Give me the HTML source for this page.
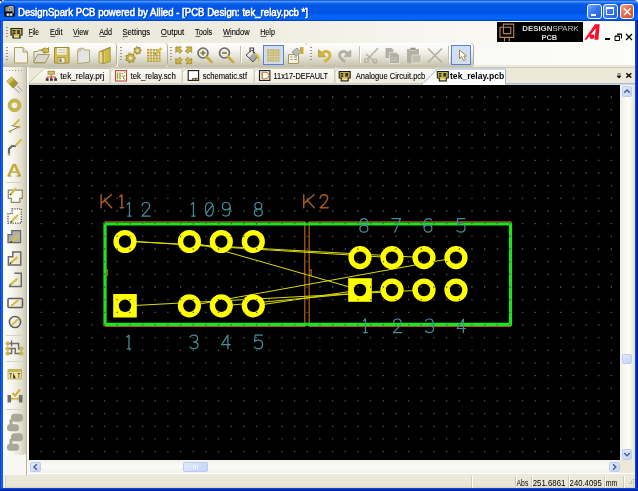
<!DOCTYPE html>
<html><head><meta charset="utf-8">
<style>
*{margin:0;padding:0;box-sizing:border-box}
html,body{width:638px;height:491px;overflow:hidden;background:#ece9d8;font-family:"Liberation Sans",sans-serif;-webkit-font-smoothing:antialiased}
.a{position:absolute}
svg.a{overflow:visible}
#title{left:0;top:0;width:638px;height:21px;background:linear-gradient(#1d63e2 0,#1d63e2 1px,#4a96ff 1px,#4592ff 2px,#1468f0 3px,#0357e6 5px,#0055e5 13px,#0061f6 15px,#0066fc 19px,#0050dc 20px,#0038b0 21px)}
#menubar{left:3px;top:21px;width:632px;height:22px;background:linear-gradient(90deg,#e9e7d6 0,#eeecdf 35%,#f8f7f1 70%,#fdfdfb 100%)}
#tbarea{left:3px;top:43px;width:632px;height:22px;background:linear-gradient(90deg,#f3f2ea 0,#f8f7f2 60%,#fcfcfa 100%)}
.tb{top:43px;height:23.5px;background:linear-gradient(#fefefd 0,#f8f7f3 25%,#e9e7dd 52%,#d6d3c1 78%,#c2beaa 100%);border-radius:0 4px 4px 0;box-shadow:1px 0 0 #b4b09a}
.grip{width:2px;background:repeating-linear-gradient(#9c9986 0,#9c9986 1px,transparent 1px,transparent 3px)}
.sep{width:1px;height:17px;background:#c3bfaa;top:46px;box-shadow:1px 0 0 #fff}
#tabbar{left:27px;top:66.5px;width:608px;height:18.5px;background:#ece9d8}
#lefttb{left:3px;top:67px;width:23px;height:387.5px;background:linear-gradient(90deg,#fefefd 0,#f6f5ef 40%,#e3e0d0 80%,#cdc9b5 100%);border-radius:0 0 4px 4px}
#leftdock{left:3px;top:454.5px;width:24px;height:20px;background:#f8f7f1}
#canvas{left:29px;top:85px;width:591px;height:375px;background:#000}
#vscroll{left:620px;top:85px;width:14.8px;height:375px;background:linear-gradient(90deg,#eeede5 0,#f7f7f2 30%,#fdfdf9 60%,#efede1 85%,#e4e0cc 100%)}
#hscroll{left:29px;top:460px;width:591px;height:12.5px;background:linear-gradient(#f1f0e8,#fbfbf7 45%,#f3f2ea)}
.sbtn{background:linear-gradient(135deg,#e2eafd,#c3d4fa);border:1px solid #b9cbf3;border-radius:2px}
#status{left:3px;top:475px;width:632px;height:12.8px;background:linear-gradient(#ece9da,#e9e6d5 85%,#dcd4b4 100%)}
.st{top:476px;height:12px;border-left:1px solid #cfcbb6;box-shadow:inset 1px 0 0 #fff}
</style></head><body>
<div id="canvas" class="a"></div>
<svg class="a" style="left:0;top:0" width="638" height="491"><g fill="none" stroke="#a85a1c" stroke-width="1.3"><path d="M105.5,221.9 H304.8 V326.3 H105.5 Z"/><path d="M309.2,221.9 H510.5 V326.3 H309.2 Z"/><path d="M105.5,270 h2 v5 h-2"/><path d="M309.2,270 h2 v5 h-2"/></g><path fill="none" stroke="#1ee41e" stroke-width="3.2" d="M105,224 H510.5 V324.3 H105 Z"/><g stroke="#dcdc00" stroke-width="1" fill="none"><line x1="125" y1="241" x2="392" y2="257.6"/><line x1="125" y1="241" x2="424" y2="257.6"/><line x1="189" y1="241" x2="360" y2="290"/><line x1="189" y1="306" x2="456" y2="257.6"/><line x1="125" y1="306" x2="424" y2="290"/><line x1="221" y1="306" x2="392" y2="290"/><line x1="253" y1="306" x2="360" y2="290"/></g><circle cx="125" cy="241.5" r="8.90" fill="#000" stroke="#ffff00" stroke-width="5.40"/><circle cx="189.4" cy="241.5" r="8.90" fill="#000" stroke="#ffff00" stroke-width="5.40"/><circle cx="221.3" cy="241.5" r="8.90" fill="#000" stroke="#ffff00" stroke-width="5.40"/><circle cx="253.3" cy="241.5" r="8.90" fill="#000" stroke="#ffff00" stroke-width="5.40"/><circle cx="189.4" cy="305.8" r="8.90" fill="#000" stroke="#ffff00" stroke-width="5.40"/><circle cx="221.3" cy="305.8" r="8.90" fill="#000" stroke="#ffff00" stroke-width="5.40"/><circle cx="253.3" cy="305.8" r="8.90" fill="#000" stroke="#ffff00" stroke-width="5.40"/><circle cx="360" cy="257.6" r="8.90" fill="#000" stroke="#ffff00" stroke-width="5.40"/><circle cx="392" cy="257.6" r="8.90" fill="#000" stroke="#ffff00" stroke-width="5.40"/><circle cx="424" cy="257.6" r="8.90" fill="#000" stroke="#ffff00" stroke-width="5.40"/><circle cx="456" cy="257.6" r="8.90" fill="#000" stroke="#ffff00" stroke-width="5.40"/><circle cx="392" cy="290" r="8.90" fill="#000" stroke="#ffff00" stroke-width="5.40"/><circle cx="424" cy="290" r="8.90" fill="#000" stroke="#ffff00" stroke-width="5.40"/><circle cx="456" cy="290" r="8.90" fill="#000" stroke="#ffff00" stroke-width="5.40"/><path fill="#ffff00" d="M113.2,294.0h23.6v23.6h-23.6z"/><circle cx="125" cy="305.8" r="6.2" fill="#000"/><path fill="#ffff00" d="M348.2,278.2h23.6v23.6h-23.6z"/><circle cx="360" cy="290" r="6.2" fill="#000"/><g fill="none" stroke="#45929b" stroke-width="1.25" stroke-linecap="round" stroke-linejoin="round"><path transform="translate(125.00,202.50) scale(0.970)" d="M2.4,1.9 L4.6,0 L4.6,14 M2.8,14 H6.4"/><path transform="translate(141.50,202.50) scale(0.970)" d="M0.6,3.2 Q0.8,0 4.5,0 Q8.4,0 8.4,3.6 Q8.4,6.4 0.4,14 L9,14"/><path transform="translate(189.00,202.50) scale(0.970)" d="M2.4,1.9 L4.6,0 L4.6,14 M2.8,14 H6.4"/><path transform="translate(205.00,202.50) scale(0.970)" d="M4.5,0 Q0.4,0 0.4,7 Q0.4,14 4.5,14 Q8.6,14 8.6,7 Q8.6,0 4.5,0 Z M8,2.5 L1,11.5"/><path transform="translate(222.00,202.50) scale(0.970)" d="M0.8,12.8 Q2,14 4.2,14 Q8.5,14 8.5,6 Q8.5,0 4.4,0 Q0.4,0 0.4,4 Q0.4,7.6 4.4,7.6 Q7.4,7.6 8.5,5"/><path transform="translate(254.00,202.50) scale(0.970)" d="M4.5,6.8 Q0.9,6.8 0.9,3.4 Q0.9,0 4.5,0 Q8.1,0 8.1,3.4 Q8.1,6.8 4.5,6.8 Q0.4,6.8 0.4,10.4 Q0.4,14 4.5,14 Q8.6,14 8.6,10.4 Q8.6,6.8 4.5,6.8 Z"/><path transform="translate(359.50,218.60) scale(0.970)" d="M4.5,6.8 Q0.9,6.8 0.9,3.4 Q0.9,0 4.5,0 Q8.1,0 8.1,3.4 Q8.1,6.8 4.5,6.8 Q0.4,6.8 0.4,10.4 Q0.4,14 4.5,14 Q8.6,14 8.6,10.4 Q8.6,6.8 4.5,6.8 Z"/><path transform="translate(391.80,218.60) scale(0.970)" d="M0,0 L9,0 L3,14"/><path transform="translate(423.50,218.60) scale(0.970)" d="M8.2,1.2 Q7,0 4.8,0 Q0.5,0 0.5,8 Q0.5,14 4.6,14 Q8.6,14 8.6,10 Q8.6,6.4 4.6,6.4 Q1.6,6.4 0.5,9"/><path transform="translate(456.50,218.60) scale(0.970)" d="M8.6,0 L1.2,0 L0.6,6.2 Q2,5 4.5,5 Q8.8,5 8.8,9.5 Q8.8,14 4.5,14 Q1.4,14 0.4,12.2"/><path transform="translate(124.50,335.20) scale(0.970)" d="M2.4,1.9 L4.6,0 L4.6,14 M2.8,14 H6.4"/><path transform="translate(189.50,335.20) scale(0.970)" d="M0.6,1.8 Q1.8,0 4.5,0 Q8.3,0 8.3,3.5 Q8.3,6.8 4.2,6.8 Q8.8,6.8 8.8,10.4 Q8.8,14 4.5,14 Q1.4,14 0.4,12.2"/><path transform="translate(221.50,335.20) scale(0.970)" d="M6.6,14 L6.6,0 L0.2,9.8 L9,9.8"/><path transform="translate(254.00,335.20) scale(0.970)" d="M8.6,0 L1.2,0 L0.6,6.2 Q2,5 4.5,5 Q8.8,5 8.8,9.5 Q8.8,14 4.5,14 Q1.4,14 0.4,12.2"/><path transform="translate(361.00,319.00) scale(0.970)" d="M2.4,1.9 L4.6,0 L4.6,14 M2.8,14 H6.4"/><path transform="translate(393.00,319.00) scale(0.970)" d="M0.6,3.2 Q0.8,0 4.5,0 Q8.4,0 8.4,3.6 Q8.4,6.4 0.4,14 L9,14"/><path transform="translate(425.00,319.00) scale(0.970)" d="M0.6,1.8 Q1.8,0 4.5,0 Q8.3,0 8.3,3.5 Q8.3,6.8 4.2,6.8 Q8.8,6.8 8.8,10.4 Q8.8,14 4.5,14 Q1.4,14 0.4,12.2"/><path transform="translate(457.00,319.00) scale(0.970)" d="M6.6,14 L6.6,0 L0.2,9.8 L9,9.8"/></g><g fill="none" stroke="#a85a1c" stroke-width="1.6" stroke-linecap="round" stroke-linejoin="round"><path transform="translate(100.60,194.80) scale(0.930)" d="M0.6,0 L0.6,14 M11.6,0 L0.6,9.2 M4.2,5.6 L11.8,14"/><path transform="translate(117.60,194.80) scale(0.930)" d="M2.4,1.9 L4.6,0 L4.6,14 M2.8,14 H6.4"/><path transform="translate(303.20,194.80) scale(0.930)" d="M0.6,0 L0.6,14 M11.6,0 L0.6,9.2 M4.2,5.6 L11.8,14"/><path transform="translate(319.80,194.80) scale(0.930)" d="M0.6,3.2 Q0.8,0 4.5,0 Q8.4,0 8.4,3.6 Q8.4,6.4 0.4,14 L9,14"/></g><path fill="#555555" d="M40.55,96.35h1.3v1.3h-1.3zM40.55,109.01h1.3v1.3h-1.3zM40.55,121.68h1.3v1.3h-1.3zM40.55,134.34h1.3v1.3h-1.3zM40.55,147.01h1.3v1.3h-1.3zM40.55,159.67h1.3v1.3h-1.3zM40.55,172.34h1.3v1.3h-1.3zM40.55,185.00h1.3v1.3h-1.3zM40.55,197.67h1.3v1.3h-1.3zM40.55,210.33h1.3v1.3h-1.3zM40.55,223.00h1.3v1.3h-1.3zM40.55,235.66h1.3v1.3h-1.3zM40.55,248.33h1.3v1.3h-1.3zM40.55,261.00h1.3v1.3h-1.3zM40.55,273.66h1.3v1.3h-1.3zM40.55,286.33h1.3v1.3h-1.3zM40.55,298.99h1.3v1.3h-1.3zM40.55,311.65h1.3v1.3h-1.3zM40.55,324.32h1.3v1.3h-1.3zM40.55,336.99h1.3v1.3h-1.3zM40.55,349.65h1.3v1.3h-1.3zM40.55,362.31h1.3v1.3h-1.3zM40.55,374.98h1.3v1.3h-1.3zM40.55,387.64h1.3v1.3h-1.3zM40.55,400.31h1.3v1.3h-1.3zM40.55,412.98h1.3v1.3h-1.3zM40.55,425.64h1.3v1.3h-1.3zM40.55,438.31h1.3v1.3h-1.3zM40.55,450.97h1.3v1.3h-1.3zM53.22,96.35h1.3v1.3h-1.3zM53.22,109.01h1.3v1.3h-1.3zM53.22,121.68h1.3v1.3h-1.3zM53.22,134.34h1.3v1.3h-1.3zM53.22,147.01h1.3v1.3h-1.3zM53.22,159.67h1.3v1.3h-1.3zM53.22,172.34h1.3v1.3h-1.3zM53.22,185.00h1.3v1.3h-1.3zM53.22,197.67h1.3v1.3h-1.3zM53.22,210.33h1.3v1.3h-1.3zM53.22,223.00h1.3v1.3h-1.3zM53.22,235.66h1.3v1.3h-1.3zM53.22,248.33h1.3v1.3h-1.3zM53.22,261.00h1.3v1.3h-1.3zM53.22,273.66h1.3v1.3h-1.3zM53.22,286.33h1.3v1.3h-1.3zM53.22,298.99h1.3v1.3h-1.3zM53.22,311.65h1.3v1.3h-1.3zM53.22,324.32h1.3v1.3h-1.3zM53.22,336.99h1.3v1.3h-1.3zM53.22,349.65h1.3v1.3h-1.3zM53.22,362.31h1.3v1.3h-1.3zM53.22,374.98h1.3v1.3h-1.3zM53.22,387.64h1.3v1.3h-1.3zM53.22,400.31h1.3v1.3h-1.3zM53.22,412.98h1.3v1.3h-1.3zM53.22,425.64h1.3v1.3h-1.3zM53.22,438.31h1.3v1.3h-1.3zM53.22,450.97h1.3v1.3h-1.3zM65.89,96.35h1.3v1.3h-1.3zM65.89,109.01h1.3v1.3h-1.3zM65.89,121.68h1.3v1.3h-1.3zM65.89,134.34h1.3v1.3h-1.3zM65.89,147.01h1.3v1.3h-1.3zM65.89,159.67h1.3v1.3h-1.3zM65.89,172.34h1.3v1.3h-1.3zM65.89,185.00h1.3v1.3h-1.3zM65.89,197.67h1.3v1.3h-1.3zM65.89,210.33h1.3v1.3h-1.3zM65.89,223.00h1.3v1.3h-1.3zM65.89,235.66h1.3v1.3h-1.3zM65.89,248.33h1.3v1.3h-1.3zM65.89,261.00h1.3v1.3h-1.3zM65.89,273.66h1.3v1.3h-1.3zM65.89,286.33h1.3v1.3h-1.3zM65.89,298.99h1.3v1.3h-1.3zM65.89,311.65h1.3v1.3h-1.3zM65.89,324.32h1.3v1.3h-1.3zM65.89,336.99h1.3v1.3h-1.3zM65.89,349.65h1.3v1.3h-1.3zM65.89,362.31h1.3v1.3h-1.3zM65.89,374.98h1.3v1.3h-1.3zM65.89,387.64h1.3v1.3h-1.3zM65.89,400.31h1.3v1.3h-1.3zM65.89,412.98h1.3v1.3h-1.3zM65.89,425.64h1.3v1.3h-1.3zM65.89,438.31h1.3v1.3h-1.3zM65.89,450.97h1.3v1.3h-1.3zM78.56,96.35h1.3v1.3h-1.3zM78.56,109.01h1.3v1.3h-1.3zM78.56,121.68h1.3v1.3h-1.3zM78.56,134.34h1.3v1.3h-1.3zM78.56,147.01h1.3v1.3h-1.3zM78.56,159.67h1.3v1.3h-1.3zM78.56,172.34h1.3v1.3h-1.3zM78.56,185.00h1.3v1.3h-1.3zM78.56,197.67h1.3v1.3h-1.3zM78.56,210.33h1.3v1.3h-1.3zM78.56,223.00h1.3v1.3h-1.3zM78.56,235.66h1.3v1.3h-1.3zM78.56,248.33h1.3v1.3h-1.3zM78.56,261.00h1.3v1.3h-1.3zM78.56,273.66h1.3v1.3h-1.3zM78.56,286.33h1.3v1.3h-1.3zM78.56,298.99h1.3v1.3h-1.3zM78.56,311.65h1.3v1.3h-1.3zM78.56,324.32h1.3v1.3h-1.3zM78.56,336.99h1.3v1.3h-1.3zM78.56,349.65h1.3v1.3h-1.3zM78.56,362.31h1.3v1.3h-1.3zM78.56,374.98h1.3v1.3h-1.3zM78.56,387.64h1.3v1.3h-1.3zM78.56,400.31h1.3v1.3h-1.3zM78.56,412.98h1.3v1.3h-1.3zM78.56,425.64h1.3v1.3h-1.3zM78.56,438.31h1.3v1.3h-1.3zM78.56,450.97h1.3v1.3h-1.3zM91.23,96.35h1.3v1.3h-1.3zM91.23,109.01h1.3v1.3h-1.3zM91.23,121.68h1.3v1.3h-1.3zM91.23,134.34h1.3v1.3h-1.3zM91.23,147.01h1.3v1.3h-1.3zM91.23,159.67h1.3v1.3h-1.3zM91.23,172.34h1.3v1.3h-1.3zM91.23,185.00h1.3v1.3h-1.3zM91.23,197.67h1.3v1.3h-1.3zM91.23,210.33h1.3v1.3h-1.3zM91.23,223.00h1.3v1.3h-1.3zM91.23,235.66h1.3v1.3h-1.3zM91.23,248.33h1.3v1.3h-1.3zM91.23,261.00h1.3v1.3h-1.3zM91.23,273.66h1.3v1.3h-1.3zM91.23,286.33h1.3v1.3h-1.3zM91.23,298.99h1.3v1.3h-1.3zM91.23,311.65h1.3v1.3h-1.3zM91.23,324.32h1.3v1.3h-1.3zM91.23,336.99h1.3v1.3h-1.3zM91.23,349.65h1.3v1.3h-1.3zM91.23,362.31h1.3v1.3h-1.3zM91.23,374.98h1.3v1.3h-1.3zM91.23,387.64h1.3v1.3h-1.3zM91.23,400.31h1.3v1.3h-1.3zM91.23,412.98h1.3v1.3h-1.3zM91.23,425.64h1.3v1.3h-1.3zM91.23,438.31h1.3v1.3h-1.3zM91.23,450.97h1.3v1.3h-1.3zM103.90,96.35h1.3v1.3h-1.3zM103.90,109.01h1.3v1.3h-1.3zM103.90,121.68h1.3v1.3h-1.3zM103.90,134.34h1.3v1.3h-1.3zM103.90,147.01h1.3v1.3h-1.3zM103.90,159.67h1.3v1.3h-1.3zM103.90,172.34h1.3v1.3h-1.3zM103.90,185.00h1.3v1.3h-1.3zM103.90,197.67h1.3v1.3h-1.3zM103.90,210.33h1.3v1.3h-1.3zM103.90,223.00h1.3v1.3h-1.3zM103.90,235.66h1.3v1.3h-1.3zM103.90,248.33h1.3v1.3h-1.3zM103.90,261.00h1.3v1.3h-1.3zM103.90,273.66h1.3v1.3h-1.3zM103.90,286.33h1.3v1.3h-1.3zM103.90,298.99h1.3v1.3h-1.3zM103.90,311.65h1.3v1.3h-1.3zM103.90,324.32h1.3v1.3h-1.3zM103.90,336.99h1.3v1.3h-1.3zM103.90,349.65h1.3v1.3h-1.3zM103.90,362.31h1.3v1.3h-1.3zM103.90,374.98h1.3v1.3h-1.3zM103.90,387.64h1.3v1.3h-1.3zM103.90,400.31h1.3v1.3h-1.3zM103.90,412.98h1.3v1.3h-1.3zM103.90,425.64h1.3v1.3h-1.3zM103.90,438.31h1.3v1.3h-1.3zM103.90,450.97h1.3v1.3h-1.3zM116.57,96.35h1.3v1.3h-1.3zM116.57,109.01h1.3v1.3h-1.3zM116.57,121.68h1.3v1.3h-1.3zM116.57,134.34h1.3v1.3h-1.3zM116.57,147.01h1.3v1.3h-1.3zM116.57,159.67h1.3v1.3h-1.3zM116.57,172.34h1.3v1.3h-1.3zM116.57,185.00h1.3v1.3h-1.3zM116.57,197.67h1.3v1.3h-1.3zM116.57,210.33h1.3v1.3h-1.3zM116.57,223.00h1.3v1.3h-1.3zM116.57,235.66h1.3v1.3h-1.3zM116.57,248.33h1.3v1.3h-1.3zM116.57,261.00h1.3v1.3h-1.3zM116.57,273.66h1.3v1.3h-1.3zM116.57,286.33h1.3v1.3h-1.3zM116.57,298.99h1.3v1.3h-1.3zM116.57,311.65h1.3v1.3h-1.3zM116.57,324.32h1.3v1.3h-1.3zM116.57,336.99h1.3v1.3h-1.3zM116.57,349.65h1.3v1.3h-1.3zM116.57,362.31h1.3v1.3h-1.3zM116.57,374.98h1.3v1.3h-1.3zM116.57,387.64h1.3v1.3h-1.3zM116.57,400.31h1.3v1.3h-1.3zM116.57,412.98h1.3v1.3h-1.3zM116.57,425.64h1.3v1.3h-1.3zM116.57,438.31h1.3v1.3h-1.3zM116.57,450.97h1.3v1.3h-1.3zM129.24,96.35h1.3v1.3h-1.3zM129.24,109.01h1.3v1.3h-1.3zM129.24,121.68h1.3v1.3h-1.3zM129.24,134.34h1.3v1.3h-1.3zM129.24,147.01h1.3v1.3h-1.3zM129.24,159.67h1.3v1.3h-1.3zM129.24,172.34h1.3v1.3h-1.3zM129.24,185.00h1.3v1.3h-1.3zM129.24,197.67h1.3v1.3h-1.3zM129.24,210.33h1.3v1.3h-1.3zM129.24,223.00h1.3v1.3h-1.3zM129.24,235.66h1.3v1.3h-1.3zM129.24,248.33h1.3v1.3h-1.3zM129.24,261.00h1.3v1.3h-1.3zM129.24,273.66h1.3v1.3h-1.3zM129.24,286.33h1.3v1.3h-1.3zM129.24,298.99h1.3v1.3h-1.3zM129.24,311.65h1.3v1.3h-1.3zM129.24,324.32h1.3v1.3h-1.3zM129.24,336.99h1.3v1.3h-1.3zM129.24,349.65h1.3v1.3h-1.3zM129.24,362.31h1.3v1.3h-1.3zM129.24,374.98h1.3v1.3h-1.3zM129.24,387.64h1.3v1.3h-1.3zM129.24,400.31h1.3v1.3h-1.3zM129.24,412.98h1.3v1.3h-1.3zM129.24,425.64h1.3v1.3h-1.3zM129.24,438.31h1.3v1.3h-1.3zM129.24,450.97h1.3v1.3h-1.3zM141.91,96.35h1.3v1.3h-1.3zM141.91,109.01h1.3v1.3h-1.3zM141.91,121.68h1.3v1.3h-1.3zM141.91,134.34h1.3v1.3h-1.3zM141.91,147.01h1.3v1.3h-1.3zM141.91,159.67h1.3v1.3h-1.3zM141.91,172.34h1.3v1.3h-1.3zM141.91,185.00h1.3v1.3h-1.3zM141.91,197.67h1.3v1.3h-1.3zM141.91,210.33h1.3v1.3h-1.3zM141.91,223.00h1.3v1.3h-1.3zM141.91,235.66h1.3v1.3h-1.3zM141.91,248.33h1.3v1.3h-1.3zM141.91,261.00h1.3v1.3h-1.3zM141.91,273.66h1.3v1.3h-1.3zM141.91,286.33h1.3v1.3h-1.3zM141.91,298.99h1.3v1.3h-1.3zM141.91,311.65h1.3v1.3h-1.3zM141.91,324.32h1.3v1.3h-1.3zM141.91,336.99h1.3v1.3h-1.3zM141.91,349.65h1.3v1.3h-1.3zM141.91,362.31h1.3v1.3h-1.3zM141.91,374.98h1.3v1.3h-1.3zM141.91,387.64h1.3v1.3h-1.3zM141.91,400.31h1.3v1.3h-1.3zM141.91,412.98h1.3v1.3h-1.3zM141.91,425.64h1.3v1.3h-1.3zM141.91,438.31h1.3v1.3h-1.3zM141.91,450.97h1.3v1.3h-1.3zM154.58,96.35h1.3v1.3h-1.3zM154.58,109.01h1.3v1.3h-1.3zM154.58,121.68h1.3v1.3h-1.3zM154.58,134.34h1.3v1.3h-1.3zM154.58,147.01h1.3v1.3h-1.3zM154.58,159.67h1.3v1.3h-1.3zM154.58,172.34h1.3v1.3h-1.3zM154.58,185.00h1.3v1.3h-1.3zM154.58,197.67h1.3v1.3h-1.3zM154.58,210.33h1.3v1.3h-1.3zM154.58,223.00h1.3v1.3h-1.3zM154.58,235.66h1.3v1.3h-1.3zM154.58,248.33h1.3v1.3h-1.3zM154.58,261.00h1.3v1.3h-1.3zM154.58,273.66h1.3v1.3h-1.3zM154.58,286.33h1.3v1.3h-1.3zM154.58,298.99h1.3v1.3h-1.3zM154.58,311.65h1.3v1.3h-1.3zM154.58,324.32h1.3v1.3h-1.3zM154.58,336.99h1.3v1.3h-1.3zM154.58,349.65h1.3v1.3h-1.3zM154.58,362.31h1.3v1.3h-1.3zM154.58,374.98h1.3v1.3h-1.3zM154.58,387.64h1.3v1.3h-1.3zM154.58,400.31h1.3v1.3h-1.3zM154.58,412.98h1.3v1.3h-1.3zM154.58,425.64h1.3v1.3h-1.3zM154.58,438.31h1.3v1.3h-1.3zM154.58,450.97h1.3v1.3h-1.3zM167.25,96.35h1.3v1.3h-1.3zM167.25,109.01h1.3v1.3h-1.3zM167.25,121.68h1.3v1.3h-1.3zM167.25,134.34h1.3v1.3h-1.3zM167.25,147.01h1.3v1.3h-1.3zM167.25,159.67h1.3v1.3h-1.3zM167.25,172.34h1.3v1.3h-1.3zM167.25,185.00h1.3v1.3h-1.3zM167.25,197.67h1.3v1.3h-1.3zM167.25,210.33h1.3v1.3h-1.3zM167.25,223.00h1.3v1.3h-1.3zM167.25,235.66h1.3v1.3h-1.3zM167.25,248.33h1.3v1.3h-1.3zM167.25,261.00h1.3v1.3h-1.3zM167.25,273.66h1.3v1.3h-1.3zM167.25,286.33h1.3v1.3h-1.3zM167.25,298.99h1.3v1.3h-1.3zM167.25,311.65h1.3v1.3h-1.3zM167.25,324.32h1.3v1.3h-1.3zM167.25,336.99h1.3v1.3h-1.3zM167.25,349.65h1.3v1.3h-1.3zM167.25,362.31h1.3v1.3h-1.3zM167.25,374.98h1.3v1.3h-1.3zM167.25,387.64h1.3v1.3h-1.3zM167.25,400.31h1.3v1.3h-1.3zM167.25,412.98h1.3v1.3h-1.3zM167.25,425.64h1.3v1.3h-1.3zM167.25,438.31h1.3v1.3h-1.3zM167.25,450.97h1.3v1.3h-1.3zM179.92,96.35h1.3v1.3h-1.3zM179.92,109.01h1.3v1.3h-1.3zM179.92,121.68h1.3v1.3h-1.3zM179.92,134.34h1.3v1.3h-1.3zM179.92,147.01h1.3v1.3h-1.3zM179.92,159.67h1.3v1.3h-1.3zM179.92,172.34h1.3v1.3h-1.3zM179.92,185.00h1.3v1.3h-1.3zM179.92,197.67h1.3v1.3h-1.3zM179.92,210.33h1.3v1.3h-1.3zM179.92,223.00h1.3v1.3h-1.3zM179.92,235.66h1.3v1.3h-1.3zM179.92,248.33h1.3v1.3h-1.3zM179.92,261.00h1.3v1.3h-1.3zM179.92,273.66h1.3v1.3h-1.3zM179.92,286.33h1.3v1.3h-1.3zM179.92,298.99h1.3v1.3h-1.3zM179.92,311.65h1.3v1.3h-1.3zM179.92,324.32h1.3v1.3h-1.3zM179.92,336.99h1.3v1.3h-1.3zM179.92,349.65h1.3v1.3h-1.3zM179.92,362.31h1.3v1.3h-1.3zM179.92,374.98h1.3v1.3h-1.3zM179.92,387.64h1.3v1.3h-1.3zM179.92,400.31h1.3v1.3h-1.3zM179.92,412.98h1.3v1.3h-1.3zM179.92,425.64h1.3v1.3h-1.3zM179.92,438.31h1.3v1.3h-1.3zM179.92,450.97h1.3v1.3h-1.3zM192.59,96.35h1.3v1.3h-1.3zM192.59,109.01h1.3v1.3h-1.3zM192.59,121.68h1.3v1.3h-1.3zM192.59,134.34h1.3v1.3h-1.3zM192.59,147.01h1.3v1.3h-1.3zM192.59,159.67h1.3v1.3h-1.3zM192.59,172.34h1.3v1.3h-1.3zM192.59,185.00h1.3v1.3h-1.3zM192.59,197.67h1.3v1.3h-1.3zM192.59,210.33h1.3v1.3h-1.3zM192.59,223.00h1.3v1.3h-1.3zM192.59,235.66h1.3v1.3h-1.3zM192.59,248.33h1.3v1.3h-1.3zM192.59,261.00h1.3v1.3h-1.3zM192.59,273.66h1.3v1.3h-1.3zM192.59,286.33h1.3v1.3h-1.3zM192.59,298.99h1.3v1.3h-1.3zM192.59,311.65h1.3v1.3h-1.3zM192.59,324.32h1.3v1.3h-1.3zM192.59,336.99h1.3v1.3h-1.3zM192.59,349.65h1.3v1.3h-1.3zM192.59,362.31h1.3v1.3h-1.3zM192.59,374.98h1.3v1.3h-1.3zM192.59,387.64h1.3v1.3h-1.3zM192.59,400.31h1.3v1.3h-1.3zM192.59,412.98h1.3v1.3h-1.3zM192.59,425.64h1.3v1.3h-1.3zM192.59,438.31h1.3v1.3h-1.3zM192.59,450.97h1.3v1.3h-1.3zM205.26,96.35h1.3v1.3h-1.3zM205.26,109.01h1.3v1.3h-1.3zM205.26,121.68h1.3v1.3h-1.3zM205.26,134.34h1.3v1.3h-1.3zM205.26,147.01h1.3v1.3h-1.3zM205.26,159.67h1.3v1.3h-1.3zM205.26,172.34h1.3v1.3h-1.3zM205.26,185.00h1.3v1.3h-1.3zM205.26,197.67h1.3v1.3h-1.3zM205.26,210.33h1.3v1.3h-1.3zM205.26,223.00h1.3v1.3h-1.3zM205.26,235.66h1.3v1.3h-1.3zM205.26,248.33h1.3v1.3h-1.3zM205.26,261.00h1.3v1.3h-1.3zM205.26,273.66h1.3v1.3h-1.3zM205.26,286.33h1.3v1.3h-1.3zM205.26,298.99h1.3v1.3h-1.3zM205.26,311.65h1.3v1.3h-1.3zM205.26,324.32h1.3v1.3h-1.3zM205.26,336.99h1.3v1.3h-1.3zM205.26,349.65h1.3v1.3h-1.3zM205.26,362.31h1.3v1.3h-1.3zM205.26,374.98h1.3v1.3h-1.3zM205.26,387.64h1.3v1.3h-1.3zM205.26,400.31h1.3v1.3h-1.3zM205.26,412.98h1.3v1.3h-1.3zM205.26,425.64h1.3v1.3h-1.3zM205.26,438.31h1.3v1.3h-1.3zM205.26,450.97h1.3v1.3h-1.3zM217.93,96.35h1.3v1.3h-1.3zM217.93,109.01h1.3v1.3h-1.3zM217.93,121.68h1.3v1.3h-1.3zM217.93,134.34h1.3v1.3h-1.3zM217.93,147.01h1.3v1.3h-1.3zM217.93,159.67h1.3v1.3h-1.3zM217.93,172.34h1.3v1.3h-1.3zM217.93,185.00h1.3v1.3h-1.3zM217.93,197.67h1.3v1.3h-1.3zM217.93,210.33h1.3v1.3h-1.3zM217.93,223.00h1.3v1.3h-1.3zM217.93,235.66h1.3v1.3h-1.3zM217.93,248.33h1.3v1.3h-1.3zM217.93,261.00h1.3v1.3h-1.3zM217.93,273.66h1.3v1.3h-1.3zM217.93,286.33h1.3v1.3h-1.3zM217.93,298.99h1.3v1.3h-1.3zM217.93,311.65h1.3v1.3h-1.3zM217.93,324.32h1.3v1.3h-1.3zM217.93,336.99h1.3v1.3h-1.3zM217.93,349.65h1.3v1.3h-1.3zM217.93,362.31h1.3v1.3h-1.3zM217.93,374.98h1.3v1.3h-1.3zM217.93,387.64h1.3v1.3h-1.3zM217.93,400.31h1.3v1.3h-1.3zM217.93,412.98h1.3v1.3h-1.3zM217.93,425.64h1.3v1.3h-1.3zM217.93,438.31h1.3v1.3h-1.3zM217.93,450.97h1.3v1.3h-1.3zM230.60,96.35h1.3v1.3h-1.3zM230.60,109.01h1.3v1.3h-1.3zM230.60,121.68h1.3v1.3h-1.3zM230.60,134.34h1.3v1.3h-1.3zM230.60,147.01h1.3v1.3h-1.3zM230.60,159.67h1.3v1.3h-1.3zM230.60,172.34h1.3v1.3h-1.3zM230.60,185.00h1.3v1.3h-1.3zM230.60,197.67h1.3v1.3h-1.3zM230.60,210.33h1.3v1.3h-1.3zM230.60,223.00h1.3v1.3h-1.3zM230.60,235.66h1.3v1.3h-1.3zM230.60,248.33h1.3v1.3h-1.3zM230.60,261.00h1.3v1.3h-1.3zM230.60,273.66h1.3v1.3h-1.3zM230.60,286.33h1.3v1.3h-1.3zM230.60,298.99h1.3v1.3h-1.3zM230.60,311.65h1.3v1.3h-1.3zM230.60,324.32h1.3v1.3h-1.3zM230.60,336.99h1.3v1.3h-1.3zM230.60,349.65h1.3v1.3h-1.3zM230.60,362.31h1.3v1.3h-1.3zM230.60,374.98h1.3v1.3h-1.3zM230.60,387.64h1.3v1.3h-1.3zM230.60,400.31h1.3v1.3h-1.3zM230.60,412.98h1.3v1.3h-1.3zM230.60,425.64h1.3v1.3h-1.3zM230.60,438.31h1.3v1.3h-1.3zM230.60,450.97h1.3v1.3h-1.3zM243.27,96.35h1.3v1.3h-1.3zM243.27,109.01h1.3v1.3h-1.3zM243.27,121.68h1.3v1.3h-1.3zM243.27,134.34h1.3v1.3h-1.3zM243.27,147.01h1.3v1.3h-1.3zM243.27,159.67h1.3v1.3h-1.3zM243.27,172.34h1.3v1.3h-1.3zM243.27,185.00h1.3v1.3h-1.3zM243.27,197.67h1.3v1.3h-1.3zM243.27,210.33h1.3v1.3h-1.3zM243.27,223.00h1.3v1.3h-1.3zM243.27,235.66h1.3v1.3h-1.3zM243.27,248.33h1.3v1.3h-1.3zM243.27,261.00h1.3v1.3h-1.3zM243.27,273.66h1.3v1.3h-1.3zM243.27,286.33h1.3v1.3h-1.3zM243.27,298.99h1.3v1.3h-1.3zM243.27,311.65h1.3v1.3h-1.3zM243.27,324.32h1.3v1.3h-1.3zM243.27,336.99h1.3v1.3h-1.3zM243.27,349.65h1.3v1.3h-1.3zM243.27,362.31h1.3v1.3h-1.3zM243.27,374.98h1.3v1.3h-1.3zM243.27,387.64h1.3v1.3h-1.3zM243.27,400.31h1.3v1.3h-1.3zM243.27,412.98h1.3v1.3h-1.3zM243.27,425.64h1.3v1.3h-1.3zM243.27,438.31h1.3v1.3h-1.3zM243.27,450.97h1.3v1.3h-1.3zM255.94,96.35h1.3v1.3h-1.3zM255.94,109.01h1.3v1.3h-1.3zM255.94,121.68h1.3v1.3h-1.3zM255.94,134.34h1.3v1.3h-1.3zM255.94,147.01h1.3v1.3h-1.3zM255.94,159.67h1.3v1.3h-1.3zM255.94,172.34h1.3v1.3h-1.3zM255.94,185.00h1.3v1.3h-1.3zM255.94,197.67h1.3v1.3h-1.3zM255.94,210.33h1.3v1.3h-1.3zM255.94,223.00h1.3v1.3h-1.3zM255.94,235.66h1.3v1.3h-1.3zM255.94,248.33h1.3v1.3h-1.3zM255.94,261.00h1.3v1.3h-1.3zM255.94,273.66h1.3v1.3h-1.3zM255.94,286.33h1.3v1.3h-1.3zM255.94,298.99h1.3v1.3h-1.3zM255.94,311.65h1.3v1.3h-1.3zM255.94,324.32h1.3v1.3h-1.3zM255.94,336.99h1.3v1.3h-1.3zM255.94,349.65h1.3v1.3h-1.3zM255.94,362.31h1.3v1.3h-1.3zM255.94,374.98h1.3v1.3h-1.3zM255.94,387.64h1.3v1.3h-1.3zM255.94,400.31h1.3v1.3h-1.3zM255.94,412.98h1.3v1.3h-1.3zM255.94,425.64h1.3v1.3h-1.3zM255.94,438.31h1.3v1.3h-1.3zM255.94,450.97h1.3v1.3h-1.3zM268.61,96.35h1.3v1.3h-1.3zM268.61,109.01h1.3v1.3h-1.3zM268.61,121.68h1.3v1.3h-1.3zM268.61,134.34h1.3v1.3h-1.3zM268.61,147.01h1.3v1.3h-1.3zM268.61,159.67h1.3v1.3h-1.3zM268.61,172.34h1.3v1.3h-1.3zM268.61,185.00h1.3v1.3h-1.3zM268.61,197.67h1.3v1.3h-1.3zM268.61,210.33h1.3v1.3h-1.3zM268.61,223.00h1.3v1.3h-1.3zM268.61,235.66h1.3v1.3h-1.3zM268.61,248.33h1.3v1.3h-1.3zM268.61,261.00h1.3v1.3h-1.3zM268.61,273.66h1.3v1.3h-1.3zM268.61,286.33h1.3v1.3h-1.3zM268.61,298.99h1.3v1.3h-1.3zM268.61,311.65h1.3v1.3h-1.3zM268.61,324.32h1.3v1.3h-1.3zM268.61,336.99h1.3v1.3h-1.3zM268.61,349.65h1.3v1.3h-1.3zM268.61,362.31h1.3v1.3h-1.3zM268.61,374.98h1.3v1.3h-1.3zM268.61,387.64h1.3v1.3h-1.3zM268.61,400.31h1.3v1.3h-1.3zM268.61,412.98h1.3v1.3h-1.3zM268.61,425.64h1.3v1.3h-1.3zM268.61,438.31h1.3v1.3h-1.3zM268.61,450.97h1.3v1.3h-1.3zM281.28,96.35h1.3v1.3h-1.3zM281.28,109.01h1.3v1.3h-1.3zM281.28,121.68h1.3v1.3h-1.3zM281.28,134.34h1.3v1.3h-1.3zM281.28,147.01h1.3v1.3h-1.3zM281.28,159.67h1.3v1.3h-1.3zM281.28,172.34h1.3v1.3h-1.3zM281.28,185.00h1.3v1.3h-1.3zM281.28,197.67h1.3v1.3h-1.3zM281.28,210.33h1.3v1.3h-1.3zM281.28,223.00h1.3v1.3h-1.3zM281.28,235.66h1.3v1.3h-1.3zM281.28,248.33h1.3v1.3h-1.3zM281.28,261.00h1.3v1.3h-1.3zM281.28,273.66h1.3v1.3h-1.3zM281.28,286.33h1.3v1.3h-1.3zM281.28,298.99h1.3v1.3h-1.3zM281.28,311.65h1.3v1.3h-1.3zM281.28,324.32h1.3v1.3h-1.3zM281.28,336.99h1.3v1.3h-1.3zM281.28,349.65h1.3v1.3h-1.3zM281.28,362.31h1.3v1.3h-1.3zM281.28,374.98h1.3v1.3h-1.3zM281.28,387.64h1.3v1.3h-1.3zM281.28,400.31h1.3v1.3h-1.3zM281.28,412.98h1.3v1.3h-1.3zM281.28,425.64h1.3v1.3h-1.3zM281.28,438.31h1.3v1.3h-1.3zM281.28,450.97h1.3v1.3h-1.3zM293.95,96.35h1.3v1.3h-1.3zM293.95,109.01h1.3v1.3h-1.3zM293.95,121.68h1.3v1.3h-1.3zM293.95,134.34h1.3v1.3h-1.3zM293.95,147.01h1.3v1.3h-1.3zM293.95,159.67h1.3v1.3h-1.3zM293.95,172.34h1.3v1.3h-1.3zM293.95,185.00h1.3v1.3h-1.3zM293.95,197.67h1.3v1.3h-1.3zM293.95,210.33h1.3v1.3h-1.3zM293.95,223.00h1.3v1.3h-1.3zM293.95,235.66h1.3v1.3h-1.3zM293.95,248.33h1.3v1.3h-1.3zM293.95,261.00h1.3v1.3h-1.3zM293.95,273.66h1.3v1.3h-1.3zM293.95,286.33h1.3v1.3h-1.3zM293.95,298.99h1.3v1.3h-1.3zM293.95,311.65h1.3v1.3h-1.3zM293.95,324.32h1.3v1.3h-1.3zM293.95,336.99h1.3v1.3h-1.3zM293.95,349.65h1.3v1.3h-1.3zM293.95,362.31h1.3v1.3h-1.3zM293.95,374.98h1.3v1.3h-1.3zM293.95,387.64h1.3v1.3h-1.3zM293.95,400.31h1.3v1.3h-1.3zM293.95,412.98h1.3v1.3h-1.3zM293.95,425.64h1.3v1.3h-1.3zM293.95,438.31h1.3v1.3h-1.3zM293.95,450.97h1.3v1.3h-1.3zM306.62,96.35h1.3v1.3h-1.3zM306.62,109.01h1.3v1.3h-1.3zM306.62,121.68h1.3v1.3h-1.3zM306.62,134.34h1.3v1.3h-1.3zM306.62,147.01h1.3v1.3h-1.3zM306.62,159.67h1.3v1.3h-1.3zM306.62,172.34h1.3v1.3h-1.3zM306.62,185.00h1.3v1.3h-1.3zM306.62,197.67h1.3v1.3h-1.3zM306.62,210.33h1.3v1.3h-1.3zM306.62,223.00h1.3v1.3h-1.3zM306.62,235.66h1.3v1.3h-1.3zM306.62,248.33h1.3v1.3h-1.3zM306.62,261.00h1.3v1.3h-1.3zM306.62,273.66h1.3v1.3h-1.3zM306.62,286.33h1.3v1.3h-1.3zM306.62,298.99h1.3v1.3h-1.3zM306.62,311.65h1.3v1.3h-1.3zM306.62,324.32h1.3v1.3h-1.3zM306.62,336.99h1.3v1.3h-1.3zM306.62,349.65h1.3v1.3h-1.3zM306.62,362.31h1.3v1.3h-1.3zM306.62,374.98h1.3v1.3h-1.3zM306.62,387.64h1.3v1.3h-1.3zM306.62,400.31h1.3v1.3h-1.3zM306.62,412.98h1.3v1.3h-1.3zM306.62,425.64h1.3v1.3h-1.3zM306.62,438.31h1.3v1.3h-1.3zM306.62,450.97h1.3v1.3h-1.3zM319.29,96.35h1.3v1.3h-1.3zM319.29,109.01h1.3v1.3h-1.3zM319.29,121.68h1.3v1.3h-1.3zM319.29,134.34h1.3v1.3h-1.3zM319.29,147.01h1.3v1.3h-1.3zM319.29,159.67h1.3v1.3h-1.3zM319.29,172.34h1.3v1.3h-1.3zM319.29,185.00h1.3v1.3h-1.3zM319.29,197.67h1.3v1.3h-1.3zM319.29,210.33h1.3v1.3h-1.3zM319.29,223.00h1.3v1.3h-1.3zM319.29,235.66h1.3v1.3h-1.3zM319.29,248.33h1.3v1.3h-1.3zM319.29,261.00h1.3v1.3h-1.3zM319.29,273.66h1.3v1.3h-1.3zM319.29,286.33h1.3v1.3h-1.3zM319.29,298.99h1.3v1.3h-1.3zM319.29,311.65h1.3v1.3h-1.3zM319.29,324.32h1.3v1.3h-1.3zM319.29,336.99h1.3v1.3h-1.3zM319.29,349.65h1.3v1.3h-1.3zM319.29,362.31h1.3v1.3h-1.3zM319.29,374.98h1.3v1.3h-1.3zM319.29,387.64h1.3v1.3h-1.3zM319.29,400.31h1.3v1.3h-1.3zM319.29,412.98h1.3v1.3h-1.3zM319.29,425.64h1.3v1.3h-1.3zM319.29,438.31h1.3v1.3h-1.3zM319.29,450.97h1.3v1.3h-1.3zM331.96,96.35h1.3v1.3h-1.3zM331.96,109.01h1.3v1.3h-1.3zM331.96,121.68h1.3v1.3h-1.3zM331.96,134.34h1.3v1.3h-1.3zM331.96,147.01h1.3v1.3h-1.3zM331.96,159.67h1.3v1.3h-1.3zM331.96,172.34h1.3v1.3h-1.3zM331.96,185.00h1.3v1.3h-1.3zM331.96,197.67h1.3v1.3h-1.3zM331.96,210.33h1.3v1.3h-1.3zM331.96,223.00h1.3v1.3h-1.3zM331.96,235.66h1.3v1.3h-1.3zM331.96,248.33h1.3v1.3h-1.3zM331.96,261.00h1.3v1.3h-1.3zM331.96,273.66h1.3v1.3h-1.3zM331.96,286.33h1.3v1.3h-1.3zM331.96,298.99h1.3v1.3h-1.3zM331.96,311.65h1.3v1.3h-1.3zM331.96,324.32h1.3v1.3h-1.3zM331.96,336.99h1.3v1.3h-1.3zM331.96,349.65h1.3v1.3h-1.3zM331.96,362.31h1.3v1.3h-1.3zM331.96,374.98h1.3v1.3h-1.3zM331.96,387.64h1.3v1.3h-1.3zM331.96,400.31h1.3v1.3h-1.3zM331.96,412.98h1.3v1.3h-1.3zM331.96,425.64h1.3v1.3h-1.3zM331.96,438.31h1.3v1.3h-1.3zM331.96,450.97h1.3v1.3h-1.3zM344.63,96.35h1.3v1.3h-1.3zM344.63,109.01h1.3v1.3h-1.3zM344.63,121.68h1.3v1.3h-1.3zM344.63,134.34h1.3v1.3h-1.3zM344.63,147.01h1.3v1.3h-1.3zM344.63,159.67h1.3v1.3h-1.3zM344.63,172.34h1.3v1.3h-1.3zM344.63,185.00h1.3v1.3h-1.3zM344.63,197.67h1.3v1.3h-1.3zM344.63,210.33h1.3v1.3h-1.3zM344.63,223.00h1.3v1.3h-1.3zM344.63,235.66h1.3v1.3h-1.3zM344.63,248.33h1.3v1.3h-1.3zM344.63,261.00h1.3v1.3h-1.3zM344.63,273.66h1.3v1.3h-1.3zM344.63,286.33h1.3v1.3h-1.3zM344.63,298.99h1.3v1.3h-1.3zM344.63,311.65h1.3v1.3h-1.3zM344.63,324.32h1.3v1.3h-1.3zM344.63,336.99h1.3v1.3h-1.3zM344.63,349.65h1.3v1.3h-1.3zM344.63,362.31h1.3v1.3h-1.3zM344.63,374.98h1.3v1.3h-1.3zM344.63,387.64h1.3v1.3h-1.3zM344.63,400.31h1.3v1.3h-1.3zM344.63,412.98h1.3v1.3h-1.3zM344.63,425.64h1.3v1.3h-1.3zM344.63,438.31h1.3v1.3h-1.3zM344.63,450.97h1.3v1.3h-1.3zM357.30,96.35h1.3v1.3h-1.3zM357.30,109.01h1.3v1.3h-1.3zM357.30,121.68h1.3v1.3h-1.3zM357.30,134.34h1.3v1.3h-1.3zM357.30,147.01h1.3v1.3h-1.3zM357.30,159.67h1.3v1.3h-1.3zM357.30,172.34h1.3v1.3h-1.3zM357.30,185.00h1.3v1.3h-1.3zM357.30,197.67h1.3v1.3h-1.3zM357.30,210.33h1.3v1.3h-1.3zM357.30,223.00h1.3v1.3h-1.3zM357.30,235.66h1.3v1.3h-1.3zM357.30,248.33h1.3v1.3h-1.3zM357.30,261.00h1.3v1.3h-1.3zM357.30,273.66h1.3v1.3h-1.3zM357.30,286.33h1.3v1.3h-1.3zM357.30,298.99h1.3v1.3h-1.3zM357.30,311.65h1.3v1.3h-1.3zM357.30,324.32h1.3v1.3h-1.3zM357.30,336.99h1.3v1.3h-1.3zM357.30,349.65h1.3v1.3h-1.3zM357.30,362.31h1.3v1.3h-1.3zM357.30,374.98h1.3v1.3h-1.3zM357.30,387.64h1.3v1.3h-1.3zM357.30,400.31h1.3v1.3h-1.3zM357.30,412.98h1.3v1.3h-1.3zM357.30,425.64h1.3v1.3h-1.3zM357.30,438.31h1.3v1.3h-1.3zM357.30,450.97h1.3v1.3h-1.3zM369.97,96.35h1.3v1.3h-1.3zM369.97,109.01h1.3v1.3h-1.3zM369.97,121.68h1.3v1.3h-1.3zM369.97,134.34h1.3v1.3h-1.3zM369.97,147.01h1.3v1.3h-1.3zM369.97,159.67h1.3v1.3h-1.3zM369.97,172.34h1.3v1.3h-1.3zM369.97,185.00h1.3v1.3h-1.3zM369.97,197.67h1.3v1.3h-1.3zM369.97,210.33h1.3v1.3h-1.3zM369.97,223.00h1.3v1.3h-1.3zM369.97,235.66h1.3v1.3h-1.3zM369.97,248.33h1.3v1.3h-1.3zM369.97,261.00h1.3v1.3h-1.3zM369.97,273.66h1.3v1.3h-1.3zM369.97,286.33h1.3v1.3h-1.3zM369.97,298.99h1.3v1.3h-1.3zM369.97,311.65h1.3v1.3h-1.3zM369.97,324.32h1.3v1.3h-1.3zM369.97,336.99h1.3v1.3h-1.3zM369.97,349.65h1.3v1.3h-1.3zM369.97,362.31h1.3v1.3h-1.3zM369.97,374.98h1.3v1.3h-1.3zM369.97,387.64h1.3v1.3h-1.3zM369.97,400.31h1.3v1.3h-1.3zM369.97,412.98h1.3v1.3h-1.3zM369.97,425.64h1.3v1.3h-1.3zM369.97,438.31h1.3v1.3h-1.3zM369.97,450.97h1.3v1.3h-1.3zM382.64,96.35h1.3v1.3h-1.3zM382.64,109.01h1.3v1.3h-1.3zM382.64,121.68h1.3v1.3h-1.3zM382.64,134.34h1.3v1.3h-1.3zM382.64,147.01h1.3v1.3h-1.3zM382.64,159.67h1.3v1.3h-1.3zM382.64,172.34h1.3v1.3h-1.3zM382.64,185.00h1.3v1.3h-1.3zM382.64,197.67h1.3v1.3h-1.3zM382.64,210.33h1.3v1.3h-1.3zM382.64,223.00h1.3v1.3h-1.3zM382.64,235.66h1.3v1.3h-1.3zM382.64,248.33h1.3v1.3h-1.3zM382.64,261.00h1.3v1.3h-1.3zM382.64,273.66h1.3v1.3h-1.3zM382.64,286.33h1.3v1.3h-1.3zM382.64,298.99h1.3v1.3h-1.3zM382.64,311.65h1.3v1.3h-1.3zM382.64,324.32h1.3v1.3h-1.3zM382.64,336.99h1.3v1.3h-1.3zM382.64,349.65h1.3v1.3h-1.3zM382.64,362.31h1.3v1.3h-1.3zM382.64,374.98h1.3v1.3h-1.3zM382.64,387.64h1.3v1.3h-1.3zM382.64,400.31h1.3v1.3h-1.3zM382.64,412.98h1.3v1.3h-1.3zM382.64,425.64h1.3v1.3h-1.3zM382.64,438.31h1.3v1.3h-1.3zM382.64,450.97h1.3v1.3h-1.3zM395.31,96.35h1.3v1.3h-1.3zM395.31,109.01h1.3v1.3h-1.3zM395.31,121.68h1.3v1.3h-1.3zM395.31,134.34h1.3v1.3h-1.3zM395.31,147.01h1.3v1.3h-1.3zM395.31,159.67h1.3v1.3h-1.3zM395.31,172.34h1.3v1.3h-1.3zM395.31,185.00h1.3v1.3h-1.3zM395.31,197.67h1.3v1.3h-1.3zM395.31,210.33h1.3v1.3h-1.3zM395.31,223.00h1.3v1.3h-1.3zM395.31,235.66h1.3v1.3h-1.3zM395.31,248.33h1.3v1.3h-1.3zM395.31,261.00h1.3v1.3h-1.3zM395.31,273.66h1.3v1.3h-1.3zM395.31,286.33h1.3v1.3h-1.3zM395.31,298.99h1.3v1.3h-1.3zM395.31,311.65h1.3v1.3h-1.3zM395.31,324.32h1.3v1.3h-1.3zM395.31,336.99h1.3v1.3h-1.3zM395.31,349.65h1.3v1.3h-1.3zM395.31,362.31h1.3v1.3h-1.3zM395.31,374.98h1.3v1.3h-1.3zM395.31,387.64h1.3v1.3h-1.3zM395.31,400.31h1.3v1.3h-1.3zM395.31,412.98h1.3v1.3h-1.3zM395.31,425.64h1.3v1.3h-1.3zM395.31,438.31h1.3v1.3h-1.3zM395.31,450.97h1.3v1.3h-1.3zM407.98,96.35h1.3v1.3h-1.3zM407.98,109.01h1.3v1.3h-1.3zM407.98,121.68h1.3v1.3h-1.3zM407.98,134.34h1.3v1.3h-1.3zM407.98,147.01h1.3v1.3h-1.3zM407.98,159.67h1.3v1.3h-1.3zM407.98,172.34h1.3v1.3h-1.3zM407.98,185.00h1.3v1.3h-1.3zM407.98,197.67h1.3v1.3h-1.3zM407.98,210.33h1.3v1.3h-1.3zM407.98,223.00h1.3v1.3h-1.3zM407.98,235.66h1.3v1.3h-1.3zM407.98,248.33h1.3v1.3h-1.3zM407.98,261.00h1.3v1.3h-1.3zM407.98,273.66h1.3v1.3h-1.3zM407.98,286.33h1.3v1.3h-1.3zM407.98,298.99h1.3v1.3h-1.3zM407.98,311.65h1.3v1.3h-1.3zM407.98,324.32h1.3v1.3h-1.3zM407.98,336.99h1.3v1.3h-1.3zM407.98,349.65h1.3v1.3h-1.3zM407.98,362.31h1.3v1.3h-1.3zM407.98,374.98h1.3v1.3h-1.3zM407.98,387.64h1.3v1.3h-1.3zM407.98,400.31h1.3v1.3h-1.3zM407.98,412.98h1.3v1.3h-1.3zM407.98,425.64h1.3v1.3h-1.3zM407.98,438.31h1.3v1.3h-1.3zM407.98,450.97h1.3v1.3h-1.3zM420.65,96.35h1.3v1.3h-1.3zM420.65,109.01h1.3v1.3h-1.3zM420.65,121.68h1.3v1.3h-1.3zM420.65,134.34h1.3v1.3h-1.3zM420.65,147.01h1.3v1.3h-1.3zM420.65,159.67h1.3v1.3h-1.3zM420.65,172.34h1.3v1.3h-1.3zM420.65,185.00h1.3v1.3h-1.3zM420.65,197.67h1.3v1.3h-1.3zM420.65,210.33h1.3v1.3h-1.3zM420.65,223.00h1.3v1.3h-1.3zM420.65,235.66h1.3v1.3h-1.3zM420.65,248.33h1.3v1.3h-1.3zM420.65,261.00h1.3v1.3h-1.3zM420.65,273.66h1.3v1.3h-1.3zM420.65,286.33h1.3v1.3h-1.3zM420.65,298.99h1.3v1.3h-1.3zM420.65,311.65h1.3v1.3h-1.3zM420.65,324.32h1.3v1.3h-1.3zM420.65,336.99h1.3v1.3h-1.3zM420.65,349.65h1.3v1.3h-1.3zM420.65,362.31h1.3v1.3h-1.3zM420.65,374.98h1.3v1.3h-1.3zM420.65,387.64h1.3v1.3h-1.3zM420.65,400.31h1.3v1.3h-1.3zM420.65,412.98h1.3v1.3h-1.3zM420.65,425.64h1.3v1.3h-1.3zM420.65,438.31h1.3v1.3h-1.3zM420.65,450.97h1.3v1.3h-1.3zM433.32,96.35h1.3v1.3h-1.3zM433.32,109.01h1.3v1.3h-1.3zM433.32,121.68h1.3v1.3h-1.3zM433.32,134.34h1.3v1.3h-1.3zM433.32,147.01h1.3v1.3h-1.3zM433.32,159.67h1.3v1.3h-1.3zM433.32,172.34h1.3v1.3h-1.3zM433.32,185.00h1.3v1.3h-1.3zM433.32,197.67h1.3v1.3h-1.3zM433.32,210.33h1.3v1.3h-1.3zM433.32,223.00h1.3v1.3h-1.3zM433.32,235.66h1.3v1.3h-1.3zM433.32,248.33h1.3v1.3h-1.3zM433.32,261.00h1.3v1.3h-1.3zM433.32,273.66h1.3v1.3h-1.3zM433.32,286.33h1.3v1.3h-1.3zM433.32,298.99h1.3v1.3h-1.3zM433.32,311.65h1.3v1.3h-1.3zM433.32,324.32h1.3v1.3h-1.3zM433.32,336.99h1.3v1.3h-1.3zM433.32,349.65h1.3v1.3h-1.3zM433.32,362.31h1.3v1.3h-1.3zM433.32,374.98h1.3v1.3h-1.3zM433.32,387.64h1.3v1.3h-1.3zM433.32,400.31h1.3v1.3h-1.3zM433.32,412.98h1.3v1.3h-1.3zM433.32,425.64h1.3v1.3h-1.3zM433.32,438.31h1.3v1.3h-1.3zM433.32,450.97h1.3v1.3h-1.3zM445.99,96.35h1.3v1.3h-1.3zM445.99,109.01h1.3v1.3h-1.3zM445.99,121.68h1.3v1.3h-1.3zM445.99,134.34h1.3v1.3h-1.3zM445.99,147.01h1.3v1.3h-1.3zM445.99,159.67h1.3v1.3h-1.3zM445.99,172.34h1.3v1.3h-1.3zM445.99,185.00h1.3v1.3h-1.3zM445.99,197.67h1.3v1.3h-1.3zM445.99,210.33h1.3v1.3h-1.3zM445.99,223.00h1.3v1.3h-1.3zM445.99,235.66h1.3v1.3h-1.3zM445.99,248.33h1.3v1.3h-1.3zM445.99,261.00h1.3v1.3h-1.3zM445.99,273.66h1.3v1.3h-1.3zM445.99,286.33h1.3v1.3h-1.3zM445.99,298.99h1.3v1.3h-1.3zM445.99,311.65h1.3v1.3h-1.3zM445.99,324.32h1.3v1.3h-1.3zM445.99,336.99h1.3v1.3h-1.3zM445.99,349.65h1.3v1.3h-1.3zM445.99,362.31h1.3v1.3h-1.3zM445.99,374.98h1.3v1.3h-1.3zM445.99,387.64h1.3v1.3h-1.3zM445.99,400.31h1.3v1.3h-1.3zM445.99,412.98h1.3v1.3h-1.3zM445.99,425.64h1.3v1.3h-1.3zM445.99,438.31h1.3v1.3h-1.3zM445.99,450.97h1.3v1.3h-1.3zM458.66,96.35h1.3v1.3h-1.3zM458.66,109.01h1.3v1.3h-1.3zM458.66,121.68h1.3v1.3h-1.3zM458.66,134.34h1.3v1.3h-1.3zM458.66,147.01h1.3v1.3h-1.3zM458.66,159.67h1.3v1.3h-1.3zM458.66,172.34h1.3v1.3h-1.3zM458.66,185.00h1.3v1.3h-1.3zM458.66,197.67h1.3v1.3h-1.3zM458.66,210.33h1.3v1.3h-1.3zM458.66,223.00h1.3v1.3h-1.3zM458.66,235.66h1.3v1.3h-1.3zM458.66,248.33h1.3v1.3h-1.3zM458.66,261.00h1.3v1.3h-1.3zM458.66,273.66h1.3v1.3h-1.3zM458.66,286.33h1.3v1.3h-1.3zM458.66,298.99h1.3v1.3h-1.3zM458.66,311.65h1.3v1.3h-1.3zM458.66,324.32h1.3v1.3h-1.3zM458.66,336.99h1.3v1.3h-1.3zM458.66,349.65h1.3v1.3h-1.3zM458.66,362.31h1.3v1.3h-1.3zM458.66,374.98h1.3v1.3h-1.3zM458.66,387.64h1.3v1.3h-1.3zM458.66,400.31h1.3v1.3h-1.3zM458.66,412.98h1.3v1.3h-1.3zM458.66,425.64h1.3v1.3h-1.3zM458.66,438.31h1.3v1.3h-1.3zM458.66,450.97h1.3v1.3h-1.3zM471.33,96.35h1.3v1.3h-1.3zM471.33,109.01h1.3v1.3h-1.3zM471.33,121.68h1.3v1.3h-1.3zM471.33,134.34h1.3v1.3h-1.3zM471.33,147.01h1.3v1.3h-1.3zM471.33,159.67h1.3v1.3h-1.3zM471.33,172.34h1.3v1.3h-1.3zM471.33,185.00h1.3v1.3h-1.3zM471.33,197.67h1.3v1.3h-1.3zM471.33,210.33h1.3v1.3h-1.3zM471.33,223.00h1.3v1.3h-1.3zM471.33,235.66h1.3v1.3h-1.3zM471.33,248.33h1.3v1.3h-1.3zM471.33,261.00h1.3v1.3h-1.3zM471.33,273.66h1.3v1.3h-1.3zM471.33,286.33h1.3v1.3h-1.3zM471.33,298.99h1.3v1.3h-1.3zM471.33,311.65h1.3v1.3h-1.3zM471.33,324.32h1.3v1.3h-1.3zM471.33,336.99h1.3v1.3h-1.3zM471.33,349.65h1.3v1.3h-1.3zM471.33,362.31h1.3v1.3h-1.3zM471.33,374.98h1.3v1.3h-1.3zM471.33,387.64h1.3v1.3h-1.3zM471.33,400.31h1.3v1.3h-1.3zM471.33,412.98h1.3v1.3h-1.3zM471.33,425.64h1.3v1.3h-1.3zM471.33,438.31h1.3v1.3h-1.3zM471.33,450.97h1.3v1.3h-1.3zM484.00,96.35h1.3v1.3h-1.3zM484.00,109.01h1.3v1.3h-1.3zM484.00,121.68h1.3v1.3h-1.3zM484.00,134.34h1.3v1.3h-1.3zM484.00,147.01h1.3v1.3h-1.3zM484.00,159.67h1.3v1.3h-1.3zM484.00,172.34h1.3v1.3h-1.3zM484.00,185.00h1.3v1.3h-1.3zM484.00,197.67h1.3v1.3h-1.3zM484.00,210.33h1.3v1.3h-1.3zM484.00,223.00h1.3v1.3h-1.3zM484.00,235.66h1.3v1.3h-1.3zM484.00,248.33h1.3v1.3h-1.3zM484.00,261.00h1.3v1.3h-1.3zM484.00,273.66h1.3v1.3h-1.3zM484.00,286.33h1.3v1.3h-1.3zM484.00,298.99h1.3v1.3h-1.3zM484.00,311.65h1.3v1.3h-1.3zM484.00,324.32h1.3v1.3h-1.3zM484.00,336.99h1.3v1.3h-1.3zM484.00,349.65h1.3v1.3h-1.3zM484.00,362.31h1.3v1.3h-1.3zM484.00,374.98h1.3v1.3h-1.3zM484.00,387.64h1.3v1.3h-1.3zM484.00,400.31h1.3v1.3h-1.3zM484.00,412.98h1.3v1.3h-1.3zM484.00,425.64h1.3v1.3h-1.3zM484.00,438.31h1.3v1.3h-1.3zM484.00,450.97h1.3v1.3h-1.3zM496.67,96.35h1.3v1.3h-1.3zM496.67,109.01h1.3v1.3h-1.3zM496.67,121.68h1.3v1.3h-1.3zM496.67,134.34h1.3v1.3h-1.3zM496.67,147.01h1.3v1.3h-1.3zM496.67,159.67h1.3v1.3h-1.3zM496.67,172.34h1.3v1.3h-1.3zM496.67,185.00h1.3v1.3h-1.3zM496.67,197.67h1.3v1.3h-1.3zM496.67,210.33h1.3v1.3h-1.3zM496.67,223.00h1.3v1.3h-1.3zM496.67,235.66h1.3v1.3h-1.3zM496.67,248.33h1.3v1.3h-1.3zM496.67,261.00h1.3v1.3h-1.3zM496.67,273.66h1.3v1.3h-1.3zM496.67,286.33h1.3v1.3h-1.3zM496.67,298.99h1.3v1.3h-1.3zM496.67,311.65h1.3v1.3h-1.3zM496.67,324.32h1.3v1.3h-1.3zM496.67,336.99h1.3v1.3h-1.3zM496.67,349.65h1.3v1.3h-1.3zM496.67,362.31h1.3v1.3h-1.3zM496.67,374.98h1.3v1.3h-1.3zM496.67,387.64h1.3v1.3h-1.3zM496.67,400.31h1.3v1.3h-1.3zM496.67,412.98h1.3v1.3h-1.3zM496.67,425.64h1.3v1.3h-1.3zM496.67,438.31h1.3v1.3h-1.3zM496.67,450.97h1.3v1.3h-1.3zM509.34,96.35h1.3v1.3h-1.3zM509.34,109.01h1.3v1.3h-1.3zM509.34,121.68h1.3v1.3h-1.3zM509.34,134.34h1.3v1.3h-1.3zM509.34,147.01h1.3v1.3h-1.3zM509.34,159.67h1.3v1.3h-1.3zM509.34,172.34h1.3v1.3h-1.3zM509.34,185.00h1.3v1.3h-1.3zM509.34,197.67h1.3v1.3h-1.3zM509.34,210.33h1.3v1.3h-1.3zM509.34,223.00h1.3v1.3h-1.3zM509.34,235.66h1.3v1.3h-1.3zM509.34,248.33h1.3v1.3h-1.3zM509.34,261.00h1.3v1.3h-1.3zM509.34,273.66h1.3v1.3h-1.3zM509.34,286.33h1.3v1.3h-1.3zM509.34,298.99h1.3v1.3h-1.3zM509.34,311.65h1.3v1.3h-1.3zM509.34,324.32h1.3v1.3h-1.3zM509.34,336.99h1.3v1.3h-1.3zM509.34,349.65h1.3v1.3h-1.3zM509.34,362.31h1.3v1.3h-1.3zM509.34,374.98h1.3v1.3h-1.3zM509.34,387.64h1.3v1.3h-1.3zM509.34,400.31h1.3v1.3h-1.3zM509.34,412.98h1.3v1.3h-1.3zM509.34,425.64h1.3v1.3h-1.3zM509.34,438.31h1.3v1.3h-1.3zM509.34,450.97h1.3v1.3h-1.3zM522.01,96.35h1.3v1.3h-1.3zM522.01,109.01h1.3v1.3h-1.3zM522.01,121.68h1.3v1.3h-1.3zM522.01,134.34h1.3v1.3h-1.3zM522.01,147.01h1.3v1.3h-1.3zM522.01,159.67h1.3v1.3h-1.3zM522.01,172.34h1.3v1.3h-1.3zM522.01,185.00h1.3v1.3h-1.3zM522.01,197.67h1.3v1.3h-1.3zM522.01,210.33h1.3v1.3h-1.3zM522.01,223.00h1.3v1.3h-1.3zM522.01,235.66h1.3v1.3h-1.3zM522.01,248.33h1.3v1.3h-1.3zM522.01,261.00h1.3v1.3h-1.3zM522.01,273.66h1.3v1.3h-1.3zM522.01,286.33h1.3v1.3h-1.3zM522.01,298.99h1.3v1.3h-1.3zM522.01,311.65h1.3v1.3h-1.3zM522.01,324.32h1.3v1.3h-1.3zM522.01,336.99h1.3v1.3h-1.3zM522.01,349.65h1.3v1.3h-1.3zM522.01,362.31h1.3v1.3h-1.3zM522.01,374.98h1.3v1.3h-1.3zM522.01,387.64h1.3v1.3h-1.3zM522.01,400.31h1.3v1.3h-1.3zM522.01,412.98h1.3v1.3h-1.3zM522.01,425.64h1.3v1.3h-1.3zM522.01,438.31h1.3v1.3h-1.3zM522.01,450.97h1.3v1.3h-1.3zM534.68,96.35h1.3v1.3h-1.3zM534.68,109.01h1.3v1.3h-1.3zM534.68,121.68h1.3v1.3h-1.3zM534.68,134.34h1.3v1.3h-1.3zM534.68,147.01h1.3v1.3h-1.3zM534.68,159.67h1.3v1.3h-1.3zM534.68,172.34h1.3v1.3h-1.3zM534.68,185.00h1.3v1.3h-1.3zM534.68,197.67h1.3v1.3h-1.3zM534.68,210.33h1.3v1.3h-1.3zM534.68,223.00h1.3v1.3h-1.3zM534.68,235.66h1.3v1.3h-1.3zM534.68,248.33h1.3v1.3h-1.3zM534.68,261.00h1.3v1.3h-1.3zM534.68,273.66h1.3v1.3h-1.3zM534.68,286.33h1.3v1.3h-1.3zM534.68,298.99h1.3v1.3h-1.3zM534.68,311.65h1.3v1.3h-1.3zM534.68,324.32h1.3v1.3h-1.3zM534.68,336.99h1.3v1.3h-1.3zM534.68,349.65h1.3v1.3h-1.3zM534.68,362.31h1.3v1.3h-1.3zM534.68,374.98h1.3v1.3h-1.3zM534.68,387.64h1.3v1.3h-1.3zM534.68,400.31h1.3v1.3h-1.3zM534.68,412.98h1.3v1.3h-1.3zM534.68,425.64h1.3v1.3h-1.3zM534.68,438.31h1.3v1.3h-1.3zM534.68,450.97h1.3v1.3h-1.3zM547.35,96.35h1.3v1.3h-1.3zM547.35,109.01h1.3v1.3h-1.3zM547.35,121.68h1.3v1.3h-1.3zM547.35,134.34h1.3v1.3h-1.3zM547.35,147.01h1.3v1.3h-1.3zM547.35,159.67h1.3v1.3h-1.3zM547.35,172.34h1.3v1.3h-1.3zM547.35,185.00h1.3v1.3h-1.3zM547.35,197.67h1.3v1.3h-1.3zM547.35,210.33h1.3v1.3h-1.3zM547.35,223.00h1.3v1.3h-1.3zM547.35,235.66h1.3v1.3h-1.3zM547.35,248.33h1.3v1.3h-1.3zM547.35,261.00h1.3v1.3h-1.3zM547.35,273.66h1.3v1.3h-1.3zM547.35,286.33h1.3v1.3h-1.3zM547.35,298.99h1.3v1.3h-1.3zM547.35,311.65h1.3v1.3h-1.3zM547.35,324.32h1.3v1.3h-1.3zM547.35,336.99h1.3v1.3h-1.3zM547.35,349.65h1.3v1.3h-1.3zM547.35,362.31h1.3v1.3h-1.3zM547.35,374.98h1.3v1.3h-1.3zM547.35,387.64h1.3v1.3h-1.3zM547.35,400.31h1.3v1.3h-1.3zM547.35,412.98h1.3v1.3h-1.3zM547.35,425.64h1.3v1.3h-1.3zM547.35,438.31h1.3v1.3h-1.3zM547.35,450.97h1.3v1.3h-1.3zM560.02,96.35h1.3v1.3h-1.3zM560.02,109.01h1.3v1.3h-1.3zM560.02,121.68h1.3v1.3h-1.3zM560.02,134.34h1.3v1.3h-1.3zM560.02,147.01h1.3v1.3h-1.3zM560.02,159.67h1.3v1.3h-1.3zM560.02,172.34h1.3v1.3h-1.3zM560.02,185.00h1.3v1.3h-1.3zM560.02,197.67h1.3v1.3h-1.3zM560.02,210.33h1.3v1.3h-1.3zM560.02,223.00h1.3v1.3h-1.3zM560.02,235.66h1.3v1.3h-1.3zM560.02,248.33h1.3v1.3h-1.3zM560.02,261.00h1.3v1.3h-1.3zM560.02,273.66h1.3v1.3h-1.3zM560.02,286.33h1.3v1.3h-1.3zM560.02,298.99h1.3v1.3h-1.3zM560.02,311.65h1.3v1.3h-1.3zM560.02,324.32h1.3v1.3h-1.3zM560.02,336.99h1.3v1.3h-1.3zM560.02,349.65h1.3v1.3h-1.3zM560.02,362.31h1.3v1.3h-1.3zM560.02,374.98h1.3v1.3h-1.3zM560.02,387.64h1.3v1.3h-1.3zM560.02,400.31h1.3v1.3h-1.3zM560.02,412.98h1.3v1.3h-1.3zM560.02,425.64h1.3v1.3h-1.3zM560.02,438.31h1.3v1.3h-1.3zM560.02,450.97h1.3v1.3h-1.3zM572.69,96.35h1.3v1.3h-1.3zM572.69,109.01h1.3v1.3h-1.3zM572.69,121.68h1.3v1.3h-1.3zM572.69,134.34h1.3v1.3h-1.3zM572.69,147.01h1.3v1.3h-1.3zM572.69,159.67h1.3v1.3h-1.3zM572.69,172.34h1.3v1.3h-1.3zM572.69,185.00h1.3v1.3h-1.3zM572.69,197.67h1.3v1.3h-1.3zM572.69,210.33h1.3v1.3h-1.3zM572.69,223.00h1.3v1.3h-1.3zM572.69,235.66h1.3v1.3h-1.3zM572.69,248.33h1.3v1.3h-1.3zM572.69,261.00h1.3v1.3h-1.3zM572.69,273.66h1.3v1.3h-1.3zM572.69,286.33h1.3v1.3h-1.3zM572.69,298.99h1.3v1.3h-1.3zM572.69,311.65h1.3v1.3h-1.3zM572.69,324.32h1.3v1.3h-1.3zM572.69,336.99h1.3v1.3h-1.3zM572.69,349.65h1.3v1.3h-1.3zM572.69,362.31h1.3v1.3h-1.3zM572.69,374.98h1.3v1.3h-1.3zM572.69,387.64h1.3v1.3h-1.3zM572.69,400.31h1.3v1.3h-1.3zM572.69,412.98h1.3v1.3h-1.3zM572.69,425.64h1.3v1.3h-1.3zM572.69,438.31h1.3v1.3h-1.3zM572.69,450.97h1.3v1.3h-1.3zM585.36,96.35h1.3v1.3h-1.3zM585.36,109.01h1.3v1.3h-1.3zM585.36,121.68h1.3v1.3h-1.3zM585.36,134.34h1.3v1.3h-1.3zM585.36,147.01h1.3v1.3h-1.3zM585.36,159.67h1.3v1.3h-1.3zM585.36,172.34h1.3v1.3h-1.3zM585.36,185.00h1.3v1.3h-1.3zM585.36,197.67h1.3v1.3h-1.3zM585.36,210.33h1.3v1.3h-1.3zM585.36,223.00h1.3v1.3h-1.3zM585.36,235.66h1.3v1.3h-1.3zM585.36,248.33h1.3v1.3h-1.3zM585.36,261.00h1.3v1.3h-1.3zM585.36,273.66h1.3v1.3h-1.3zM585.36,286.33h1.3v1.3h-1.3zM585.36,298.99h1.3v1.3h-1.3zM585.36,311.65h1.3v1.3h-1.3zM585.36,324.32h1.3v1.3h-1.3zM585.36,336.99h1.3v1.3h-1.3zM585.36,349.65h1.3v1.3h-1.3zM585.36,362.31h1.3v1.3h-1.3zM585.36,374.98h1.3v1.3h-1.3zM585.36,387.64h1.3v1.3h-1.3zM585.36,400.31h1.3v1.3h-1.3zM585.36,412.98h1.3v1.3h-1.3zM585.36,425.64h1.3v1.3h-1.3zM585.36,438.31h1.3v1.3h-1.3zM585.36,450.97h1.3v1.3h-1.3zM598.03,96.35h1.3v1.3h-1.3zM598.03,109.01h1.3v1.3h-1.3zM598.03,121.68h1.3v1.3h-1.3zM598.03,134.34h1.3v1.3h-1.3zM598.03,147.01h1.3v1.3h-1.3zM598.03,159.67h1.3v1.3h-1.3zM598.03,172.34h1.3v1.3h-1.3zM598.03,185.00h1.3v1.3h-1.3zM598.03,197.67h1.3v1.3h-1.3zM598.03,210.33h1.3v1.3h-1.3zM598.03,223.00h1.3v1.3h-1.3zM598.03,235.66h1.3v1.3h-1.3zM598.03,248.33h1.3v1.3h-1.3zM598.03,261.00h1.3v1.3h-1.3zM598.03,273.66h1.3v1.3h-1.3zM598.03,286.33h1.3v1.3h-1.3zM598.03,298.99h1.3v1.3h-1.3zM598.03,311.65h1.3v1.3h-1.3zM598.03,324.32h1.3v1.3h-1.3zM598.03,336.99h1.3v1.3h-1.3zM598.03,349.65h1.3v1.3h-1.3zM598.03,362.31h1.3v1.3h-1.3zM598.03,374.98h1.3v1.3h-1.3zM598.03,387.64h1.3v1.3h-1.3zM598.03,400.31h1.3v1.3h-1.3zM598.03,412.98h1.3v1.3h-1.3zM598.03,425.64h1.3v1.3h-1.3zM598.03,438.31h1.3v1.3h-1.3zM598.03,450.97h1.3v1.3h-1.3zM610.70,96.35h1.3v1.3h-1.3zM610.70,109.01h1.3v1.3h-1.3zM610.70,121.68h1.3v1.3h-1.3zM610.70,134.34h1.3v1.3h-1.3zM610.70,147.01h1.3v1.3h-1.3zM610.70,159.67h1.3v1.3h-1.3zM610.70,172.34h1.3v1.3h-1.3zM610.70,185.00h1.3v1.3h-1.3zM610.70,197.67h1.3v1.3h-1.3zM610.70,210.33h1.3v1.3h-1.3zM610.70,223.00h1.3v1.3h-1.3zM610.70,235.66h1.3v1.3h-1.3zM610.70,248.33h1.3v1.3h-1.3zM610.70,261.00h1.3v1.3h-1.3zM610.70,273.66h1.3v1.3h-1.3zM610.70,286.33h1.3v1.3h-1.3zM610.70,298.99h1.3v1.3h-1.3zM610.70,311.65h1.3v1.3h-1.3zM610.70,324.32h1.3v1.3h-1.3zM610.70,336.99h1.3v1.3h-1.3zM610.70,349.65h1.3v1.3h-1.3zM610.70,362.31h1.3v1.3h-1.3zM610.70,374.98h1.3v1.3h-1.3zM610.70,387.64h1.3v1.3h-1.3zM610.70,400.31h1.3v1.3h-1.3zM610.70,412.98h1.3v1.3h-1.3zM610.70,425.64h1.3v1.3h-1.3zM610.70,438.31h1.3v1.3h-1.3zM610.70,450.97h1.3v1.3h-1.3z"/></svg>

<div id="title" class="a"></div>
<svg class="a" style="left:0;top:0" width="638" height="6"><rect x="0" y="0" width="2" height="1" fill="#2a2a2a"/><rect x="0" y="1" width="1.2" height="2.5" fill="#e8e6d8"/><rect x="2" y="0" width="2" height="1" fill="#b8c8ee"/><path d="M634,0 H638 V4 Q638,0 634,0Z" fill="#f2f1ea"/><path d="M636,0 H638 V2.5 Q637.5,0.5 636,0Z" fill="#fbfbf8"/></svg>
<svg class="a" style="left:0;top:0" width="20" height="20"><rect x="4.2" y="5.6" width="10.6" height="11.2" rx="1.6" fill="#0a0a0a"/><rect x="5.4" y="6.8" width="7.4" height="4.6" fill="#8c8c8c"/><path d="M8.5,6.7 H13.2 V13.2" fill="none" stroke="#e8e8e8" stroke-width="0.9"/><circle cx="9.4" cy="9.3" r="1.5" fill="#d8d8d8"/><circle cx="9.4" cy="9.3" r="0.8" fill="#111"/><rect x="6.6" y="13.4" width="2.3" height="2.4" fill="#f4f4f4"/><rect x="9.6" y="13.4" width="2.8" height="2.4" fill="#e8e8e8"/></svg>
<div class="a" style="left:587px;top:4px;width:14.5px;height:15px;border:1px solid #f4f8ff;border-radius:3px;background:linear-gradient(135deg,#78a6ff,#3a78f2 45%,#2560e0)"></div>
<div class="a" style="left:591px;top:13.5px;width:5px;height:2px;background:#fff"></div>
<div class="a" style="left:603px;top:4px;width:14.5px;height:15px;border:1px solid #f4f8ff;border-radius:3px;background:linear-gradient(135deg,#78a6ff,#3a78f2 45%,#2560e0)"></div>
<div class="a" style="left:606px;top:7px;width:8px;height:8px;border:1px solid #fff;border-top-width:2px"></div>
<div class="a" style="left:619.5px;top:4px;width:14.5px;height:15px;border:1px solid #fbf4f0;border-radius:3px;background:linear-gradient(135deg,#f4a88a,#e2683f 50%,#d0502a)"></div>
<svg class="a" style="left:619.5px;top:4px" width="15" height="15"><path d="M4,4.5 L10.5,11 M10.5,4.5 L4,11" stroke="#fff" stroke-width="1.7"/></svg>

<div class="a" style="left:0;top:20px;width:3px;height:471px;background:linear-gradient(90deg,#0038b8,#1a66f4 55%,#0852e0)"></div>
<div class="a" style="left:634.8px;top:20px;width:3.2px;height:471px;background:linear-gradient(90deg,#0c4ee0,#0034c0 45%,#001a8e)"></div>
<div class="a" style="left:0;top:487.8px;width:638px;height:3.2px;background:linear-gradient(#0c48e0,#0036c4 45%,#001a90)"></div>

<div id="menubar" class="a"></div>
<div class="a grip" style="left:6px;top:27px;height:11px"></div>
<svg class="a" style="left:9.5px;top:26.5px" width="13" height="12"><path d="M1,1.5h11v6.5h-2v3h-7v-3h-2z" fill="#c9b544" stroke="#1e1e1e" stroke-width="1.2"/><rect x="2.5" y="3" width="3" height="1.5" fill="#222"/><rect x="2.5" y="5.5" width="3" height="1.5" fill="#222"/><rect x="7" y="3" width="3" height="4" fill="#444"/><rect x="4" y="8.5" width="5" height="2" fill="#e8dc88"/></svg>
<div class="a" style="left:497px;top:22.2px;width:85.5px;height:19.4px;background:#000"></div>
<svg class="a" style="left:0;top:0" width="638" height="60"><path d="M503.4,33.6 V24.1 H513.7 V37.4 H500 V27.3 H510.8 V33.6 H503.4 M504.5,37.4 V41.6 M509.2,37.4 V41.6" fill="none" stroke="#b8875a" stroke-width="1.1"/></svg>
<svg class="a" style="left:0;top:0" width="638" height="60"><path d="M584.3,39.7 L595,24.3 L599.7,24.3 L598.4,39.7 L594.4,39.7 L595.8,28.2 L586.6,39.7 Z" fill="#f70f2c"/><circle cx="592" cy="36.7" r="2.4" fill="#f70f2c"/></svg>
<div class="a" style="left:605px;top:37.5px;width:5px;height:2px;background:#000"></div>
<svg class="a" style="left:614px;top:33px" width="9" height="8"><path d="M3,1h4.5v4.5M1,3h4.5v4.5h-4.5z" fill="none" stroke="#000" stroke-width="1"/><path d="M3,1.4h4.5M1,3.4h4.5" stroke="#000" stroke-width="0.8"/></svg>
<svg class="a" style="left:624.5px;top:32.5px" width="8" height="8"><path d="M1,1L7,7M7,1L1,7" stroke="#000" stroke-width="1.3"/></svg>

<div id="tbarea" class="a"></div>
<div class="a tb" style="left:3px;width:113px"></div>
<div class="a tb" style="left:117.5px;width:49px"></div>
<div class="a tb" style="left:167.5px;width:139px"></div>
<div class="a tb" style="left:307px;width:166px"></div>
<div class="a grip" style="left:6px;top:47px;height:15px"></div>
<div class="a grip" style="left:119.5px;top:47px;height:15px"></div>
<div class="a grip" style="left:170px;top:47px;height:15px"></div>
<div class="a grip" style="left:310px;top:47px;height:15px"></div>
<div class="a sep" style="left:239.5px"></div>
<div class="a sep" style="left:358.5px"></div>
<div class="a sep" style="left:447.5px"></div>
<div class="a" style="left:263px;top:45px;width:21px;height:19.5px;background:#d3ddf1;border:1px solid #5384d6"></div>
<div class="a" style="left:451px;top:45px;width:20px;height:19.5px;background:#d3ddf1;border:1px solid #5384d6"></div>

<div id="tabbar" class="a"></div>
<div class="a" style="left:27px;top:66.5px;width:608px;height:1px;background:#cdc9b4"></div>
<svg class="a" style="left:0;top:0" width="638" height="491"><defs><linearGradient id="tg" x1="0" y1="0" x2="0" y2="1"><stop offset="0" stop-color="#fbfbf8"/><stop offset="1" stop-color="#eeebdd"/></linearGradient></defs><rect x="27" y="83" width="608" height="1.5" fill="#a9bdd8"/><path d="M28,83.5 L44.5,68.5 H110 V83.5 Z" fill="url(#tg)" stroke="#c9c5b1" stroke-width="1"/><path d="M110.5,83.5 V72 L114.0,68.5 H182 V83.5 Z" fill="url(#tg)" stroke="#d2cebb" stroke-width="1"/><path d="M182.5,83.5 V72 L186.0,68.5 H254 V83.5 Z" fill="url(#tg)" stroke="#d2cebb" stroke-width="1"/><path d="M254.5,83.5 V72 L258.0,68.5 H334.5 V83.5 Z" fill="url(#tg)" stroke="#d2cebb" stroke-width="1"/><path d="M335,83.5 V72 L338.5,68.5 H436 V83.5 Z" fill="url(#tg)" stroke="#d2cebb" stroke-width="1"/><path d="M422.5,84 L437.5,69 H505.5 V84 Z" fill="#ffffff" stroke="#9fb5d6" stroke-width="1"/><rect x="423" y="83" width="82" height="2" fill="#fff"/></svg>

<div id="lefttb" class="a"></div>
<div id="leftdock" class="a"></div>
<div class="a" style="left:26px;top:67px;width:3px;height:408px;background:linear-gradient(90deg,#b8b49f 0,#b8b49f 33%,#fdfdfb 45%,#f2f1ea 100%)"></div>
<div class="a" style="left:6px;top:70px;width:16px;height:1px;background:repeating-linear-gradient(90deg,#a09d8a 0,#a09d8a 1px,transparent 1px,transparent 3px)"></div>
<div class="a" style="left:6px;top:182px;width:16px;height:1px;background:#d8d4c2"></div>
<div class="a" style="left:6px;top:335px;width:16px;height:1px;background:#d8d4c2"></div>
<div class="a" style="left:6px;top:361px;width:16px;height:1px;background:#d8d4c2"></div>
<div class="a" style="left:6px;top:409px;width:16px;height:1px;background:#d8d4c2"></div>

<div id="vscroll" class="a"></div>
<div class="a sbtn" style="left:621.5px;top:86px;width:10px;height:10.5px"></div>
<svg class="a" style="left:621.5px;top:86px" width="10" height="11"><path d="M2.2,6.8 L5,4 L7.8,6.8" stroke="#4d6185" stroke-width="1.5" fill="none"/></svg>
<div class="a sbtn" style="left:621.5px;top:449px;width:10px;height:10.5px"></div>
<svg class="a" style="left:621.5px;top:449px" width="10" height="11"><path d="M2.2,4 L5,6.8 L7.8,4" stroke="#4d6185" stroke-width="1.5" fill="none"/></svg>
<div class="a sbtn" style="left:621.5px;top:354px;width:10px;height:10px"></div>
<div id="hscroll" class="a"></div>
<div class="a sbtn" style="left:30px;top:461.5px;width:10.5px;height:10px"></div>
<svg class="a" style="left:30px;top:461.5px" width="11" height="10"><path d="M6.8,2.2 L4,5 L6.8,7.8" stroke="#4d6185" stroke-width="1.5" fill="none"/></svg>
<div class="a sbtn" style="left:183px;top:461.5px;width:25px;height:10px"></div>
<svg class="a" style="left:183px;top:461.5px" width="25" height="10"><path d="M10.5,3v4M12.5,3v4M14.5,3v4" stroke="#eef3fe" stroke-width="1"/></svg>
<div class="a sbtn" style="left:609px;top:461.5px;width:10.5px;height:10px"></div>
<svg class="a" style="left:609px;top:461.5px" width="11" height="10"><path d="M4,2.2 L6.8,5 L4,7.8" stroke="#4d6185" stroke-width="1.5" fill="none"/></svg>
<div class="a" style="left:620px;top:460px;width:15px;height:13px;background:#ece9d8"></div>
<div class="a" style="left:27px;top:472.5px;width:608px;height:1px;background:#fff"></div>
<div class="a" style="left:3px;top:474.6px;width:632px;height:1.3px;background:#c2bea8"></div>

<div id="status" class="a"></div>
<div class="a" style="left:3.5px;top:476px;width:1px;height:11.5px;background:#fbfaf5"></div><div class="a" style="left:5px;top:476px;width:1px;height:11.5px;background:#d4d0bc"></div>
<div class="a st" style="left:471px;width:44px"></div>
<div class="a st" style="left:515px;width:15px"></div>
<div class="a st" style="left:531px;width:36px"></div>
<div class="a st" style="left:567.5px;width:36px"></div>
<div class="a st" style="left:603.5px;width:20px"></div>
<div class="a st" style="left:623px;width:12px"></div>
<svg class="a" style="left:624px;top:477px" width="11" height="11"><path d="M9,2h1v1h-1zM7,4h1v1h-1zM9,4h1v1h-1zM5,6h1v1h-1zM7,6h1v1h-1zM9,6h1v1h-1z" fill="#a9a592"/></svg>
<svg class="a" style="left:0;top:0" width="638" height="491"><path d="M14.5,47.5h8.5l4.5,4.5v11h-13z" fill="#f2f2ee" stroke="#b0a05a" stroke-width="1"/><path d="M23,47.5v4.5h4.5" fill="#ddd" stroke="#b0a05a" stroke-width="1"/><path d="M34,51.5h4l1,-1.5h4v2.5h2v10.5h-11z" fill="#e8e8e2" stroke="#a89a5c"/><path d="M33.5,62.5l4,-8h12l-4,8z" fill="#d6d6ce" stroke="#a89a5c"/><path d="M41,50.5 q3,-4 6,-1.5 l1.5,-1.5 v5 h-5 l1.5,-1.5 q-2,-2 -4,-0.5z" fill="#d8c040" stroke="#9a8428" stroke-width="0.8"/><path d="M54.5,47.5h14.5v15.5h-14.5z" fill="#d4c050" stroke="#a08a30"/><rect x="57" y="48" width="9.5" height="6.5" fill="#f6f4e8"/><path d="M58,50h7.5M58,52.5h7.5" stroke="#b8b4a0" stroke-width="0.8"/><rect x="58" y="57.5" width="7" height="5.5" fill="#eeeadc" stroke="#a08a30" stroke-width="0.8"/><rect x="59.5" y="58.5" width="2" height="3.5" fill="#777"/><path d="M77.5,51 Q77.8,48.3 80.6,48.3 L83.6,48.3 L84.6,50 L89.5,50 L89.5,62.2 L77.8,63.6 Z" fill="#e4e4e0" stroke="#b2a66c" stroke-width="1"/><path d="M78.3,52 Q79,49.3 82,49.2 Q81,51.5 78.3,52Z" fill="#a8a8a4"/><path d="M99,52.2 L103,50.4 L103,63.7 L99,62.6 Z" fill="#e9de98" stroke="#9e8a34" stroke-width="0.8"/><path d="M103,50.4 L110.2,47.4 L110.2,61.6 L103,63.7 Z" fill="#cfba46" stroke="#9e8a34" stroke-width="0.8"/><path d="M99,52.2 L106.5,49 L110.2,47.4 L103,50.4 Z" fill="#f2eaba" stroke="#9e8a34" stroke-width="0.6"/><path d="M104.5,51.5 L104.5,62.5" stroke="#e0d070" stroke-width="0.8"/><polygon points="135.70,58.00 133.87,59.62 133.74,62.07 131.33,61.65 129.34,63.07 128.17,60.93 125.81,60.26 126.76,58.00 125.81,55.74 128.17,55.07 129.34,52.93 131.33,54.35 133.74,53.93 133.87,56.38" fill="#c8b44a" stroke="#8c7a2c" stroke-width="0.8"/><circle cx="130.5" cy="58" r="1.6" fill="#f0ead0"/><polygon points="141.50,50.50 140.09,51.75 139.99,53.63 138.14,53.31 136.61,54.40 135.70,52.75 133.90,52.24 134.62,50.50 133.90,48.76 135.70,48.25 136.61,46.60 138.14,47.69 139.99,47.37 140.09,49.25" fill="#c8b44a" stroke="#8c7a2c" stroke-width="0.8"/><circle cx="137.5" cy="50.5" r="1.2" fill="#f0ead0"/><rect x="147.6" y="49" width="0.9" height="12.8" fill="#d0bc58"/><rect x="147.2" y="49.6" width="12.8" height="0.9" fill="#d0bc58"/><rect x="150.5" y="49" width="0.9" height="12.8" fill="#d0bc58"/><rect x="147.2" y="52.4" width="12.8" height="0.9" fill="#d0bc58"/><rect x="153.4" y="49" width="0.9" height="12.8" fill="#d0bc58"/><rect x="147.2" y="55.2" width="12.8" height="0.9" fill="#d0bc58"/><rect x="156.3" y="49" width="0.9" height="12.8" fill="#d0bc58"/><rect x="147.2" y="58.0" width="12.8" height="0.9" fill="#d0bc58"/><rect x="159.2" y="49" width="0.9" height="12.8" fill="#d0bc58"/><rect x="147.2" y="60.8" width="12.8" height="0.9" fill="#d0bc58"/><rect x="147.2" y="49.2" width="1.8" height="1.6" fill="#b8a034"/><rect x="147.2" y="52.0" width="1.8" height="1.6" fill="#b8a034"/><rect x="147.2" y="54.8" width="1.8" height="1.6" fill="#b8a034"/><rect x="147.2" y="57.6" width="1.8" height="1.6" fill="#b8a034"/><rect x="147.2" y="60.4" width="1.8" height="1.6" fill="#b8a034"/><rect x="150.1" y="49.2" width="1.8" height="1.6" fill="#b8a034"/><rect x="150.1" y="52.0" width="1.8" height="1.6" fill="#b8a034"/><rect x="150.1" y="54.8" width="1.8" height="1.6" fill="#b8a034"/><rect x="150.1" y="57.6" width="1.8" height="1.6" fill="#b8a034"/><rect x="150.1" y="60.4" width="1.8" height="1.6" fill="#b8a034"/><rect x="153.0" y="49.2" width="1.8" height="1.6" fill="#b8a034"/><rect x="153.0" y="52.0" width="1.8" height="1.6" fill="#b8a034"/><rect x="153.0" y="54.8" width="1.8" height="1.6" fill="#b8a034"/><rect x="153.0" y="57.6" width="1.8" height="1.6" fill="#b8a034"/><rect x="153.0" y="60.4" width="1.8" height="1.6" fill="#b8a034"/><rect x="155.9" y="49.2" width="1.8" height="1.6" fill="#b8a034"/><rect x="155.9" y="52.0" width="1.8" height="1.6" fill="#b8a034"/><rect x="155.9" y="54.8" width="1.8" height="1.6" fill="#b8a034"/><rect x="155.9" y="57.6" width="1.8" height="1.6" fill="#b8a034"/><rect x="155.9" y="60.4" width="1.8" height="1.6" fill="#b8a034"/><rect x="158.8" y="49.2" width="1.8" height="1.6" fill="#b8a034"/><rect x="158.8" y="52.0" width="1.8" height="1.6" fill="#b8a034"/><rect x="158.8" y="54.8" width="1.8" height="1.6" fill="#b8a034"/><rect x="158.8" y="57.6" width="1.8" height="1.6" fill="#b8a034"/><rect x="158.8" y="60.4" width="1.8" height="1.6" fill="#b8a034"/><path d="M155.8,53.5 L161.5,48" stroke="#d8c040" stroke-width="2.4"/><path d="M155.8,53.5 l-1,1" stroke="#6a6a80" stroke-width="1.6"/><polygon points="175.8,46.9 181.4,46.9 179.8,48.5 182.2,50.9 179.8,53.3 177.4,50.9 175.8,52.5" fill="#cdb644" stroke="#927e2a" stroke-width="0.7" stroke-linejoin="round"/><polygon points="191.7,46.9 186.1,46.9 187.7,48.5 185.3,50.9 187.7,53.3 190.1,50.9 191.7,52.5" fill="#cdb644" stroke="#927e2a" stroke-width="0.7" stroke-linejoin="round"/><polygon points="175.8,63.7 181.4,63.7 179.8,62.1 182.2,59.7 179.8,57.3 177.4,59.7 175.8,58.1" fill="#cdb644" stroke="#927e2a" stroke-width="0.7" stroke-linejoin="round"/><polygon points="191.7,63.7 186.1,63.7 187.7,62.1 185.3,59.7 187.7,57.3 190.1,59.7 191.7,58.1" fill="#cdb644" stroke="#927e2a" stroke-width="0.7" stroke-linejoin="round"/><circle cx="203" cy="53" r="5" fill="#e8e8e4" stroke="#6a6a6a" stroke-width="1.6"/><path d="M206.6,57 l5,5" stroke="#c4ac3c" stroke-width="2.6" stroke-linecap="round"/><path d="M200.5,53h5" stroke="#8c7a2c" stroke-width="1.6"/><path d="M203,50.5v5" stroke="#8c7a2c" stroke-width="1.6"/><circle cx="224.5" cy="53" r="5" fill="#e8e8e4" stroke="#6a6a6a" stroke-width="1.6"/><path d="M228.1,57 l5,5" stroke="#c4ac3c" stroke-width="2.6" stroke-linecap="round"/><path d="M222.0,53h5" stroke="#8c7a2c" stroke-width="1.6"/><path d="M246,55 l6,-5 l6,6 l-5,6 z" fill="#a8a8a8" stroke="#555" stroke-width="1"/><path d="M247,55 l5,-4.5 l2,2 l-5,5z" fill="#e8e8e8"/><path d="M250,52 v-4 h3.5 v5" fill="none" stroke="#444" stroke-width="1.2"/><path d="M255.5,53 q4,2 4,5 v4 l-2,-1 v-3 q-1,-2 -3,-3z" fill="#d4bc40"/><rect x="266.8" y="49" width="0.7" height="12.6" fill="#d8c888"/><rect x="266.8" y="49.0" width="13.4" height="0.7" fill="#d8c888"/><rect x="269.4" y="49" width="0.7" height="12.6" fill="#d8c888"/><rect x="266.8" y="51.5" width="13.4" height="0.7" fill="#d8c888"/><rect x="271.9" y="49" width="0.7" height="12.6" fill="#d8c888"/><rect x="266.8" y="54.0" width="13.4" height="0.7" fill="#d8c888"/><rect x="274.4" y="49" width="0.7" height="12.6" fill="#d8c888"/><rect x="266.8" y="56.6" width="13.4" height="0.7" fill="#d8c888"/><rect x="277.0" y="49" width="0.7" height="12.6" fill="#d8c888"/><rect x="266.8" y="59.1" width="13.4" height="0.7" fill="#d8c888"/><rect x="279.6" y="49" width="0.7" height="12.6" fill="#d8c888"/><rect x="266.8" y="61.6" width="13.4" height="0.7" fill="#d8c888"/><rect x="267.5" y="49.7" width="1.5" height="1.5" fill="#c0a848"/><rect x="267.5" y="52.2" width="1.5" height="1.5" fill="#c0a848"/><rect x="267.5" y="54.7" width="1.5" height="1.5" fill="#c0a848"/><rect x="267.5" y="57.3" width="1.5" height="1.5" fill="#c0a848"/><rect x="267.5" y="59.8" width="1.5" height="1.5" fill="#c0a848"/><rect x="270.1" y="49.7" width="1.5" height="1.5" fill="#c0a848"/><rect x="270.1" y="52.2" width="1.5" height="1.5" fill="#c0a848"/><rect x="270.1" y="54.7" width="1.5" height="1.5" fill="#c0a848"/><rect x="270.1" y="57.3" width="1.5" height="1.5" fill="#c0a848"/><rect x="270.1" y="59.8" width="1.5" height="1.5" fill="#c0a848"/><rect x="272.6" y="49.7" width="1.5" height="1.5" fill="#c0a848"/><rect x="272.6" y="52.2" width="1.5" height="1.5" fill="#c0a848"/><rect x="272.6" y="54.7" width="1.5" height="1.5" fill="#c0a848"/><rect x="272.6" y="57.3" width="1.5" height="1.5" fill="#c0a848"/><rect x="272.6" y="59.8" width="1.5" height="1.5" fill="#c0a848"/><rect x="275.1" y="49.7" width="1.5" height="1.5" fill="#c0a848"/><rect x="275.1" y="52.2" width="1.5" height="1.5" fill="#c0a848"/><rect x="275.1" y="54.7" width="1.5" height="1.5" fill="#c0a848"/><rect x="275.1" y="57.3" width="1.5" height="1.5" fill="#c0a848"/><rect x="275.1" y="59.8" width="1.5" height="1.5" fill="#c0a848"/><rect x="277.7" y="49.7" width="1.5" height="1.5" fill="#c0a848"/><rect x="277.7" y="52.2" width="1.5" height="1.5" fill="#c0a848"/><rect x="277.7" y="54.7" width="1.5" height="1.5" fill="#c0a848"/><rect x="277.7" y="57.3" width="1.5" height="1.5" fill="#c0a848"/><rect x="277.7" y="59.8" width="1.5" height="1.5" fill="#c0a848"/><path d="M288.5,54.5h10v9h-10z" fill="#f4f2e6" stroke="#a89a50"/><path d="M290.5,57h2M294,57h3M290.5,59.5h2M294,59.5h3" stroke="#8a8a7a" stroke-width="0.9"/><path d="M292,52 l5,-4 l4,4 l-5,4z" fill="#bbb" stroke="#888" stroke-width="0.8"/><rect x="300" y="47" width="3.5" height="7" fill="#c8b040"/><path d="M318.5,50 L322.5,52.8 L325.5,56.8 L318.5,56.8 Z" fill="#d2b636" stroke="#9a8020" stroke-width="0.6"/><path d="M321.2,54.5 Q324.5,50.2 327.8,51.8 Q331,53.6 329.6,57 Q328.2,59.6 324.2,61.6" fill="none" stroke="#d2b636" stroke-width="2.7"/><g transform="translate(669.5,0) scale(-1,1)"><path d="M318.5,50 L322.5,52.8 L325.5,56.8 L318.5,56.8 Z" fill="#b2b0a2" stroke="#b2b0a2" stroke-width="0.6"/><path d="M321.2,54.5 Q324.5,50.2 327.8,51.8 Q331,53.6 329.6,57 Q328.2,59.6 324.2,61.6" fill="none" stroke="#b2b0a2" stroke-width="2.7"/></g><path d="M367,60 l11,-12 M366,54 l10,9" stroke="#b2b0a2" stroke-width="1.3"/><circle cx="366.5" cy="60.5" r="2" fill="none" stroke="#b2b0a2" stroke-width="1.2"/><circle cx="375" cy="61" r="2" fill="none" stroke="#b2b0a2" stroke-width="1.2"/><path d="M385.5,48h6l2,2v8h-8z" fill="#b2b0a2"/><path d="M389.5,52.5h7l3,3v8h-10z" fill="#b2b0a2" stroke="#f4f3ee" stroke-width="0.6"/><path d="M391,58h6M391,60.5h6" stroke="#d0cfc6" stroke-width="0.8"/><path d="M407,49h12v14h-12z" fill="#b2b0a2"/><rect x="410" y="47.5" width="6" height="3" rx="1" fill="#9a988a" stroke="#f4f3ee" stroke-width="0.5"/><path d="M412,55h9v8h-9z" fill="#bebdaf" stroke="#f4f3ee" stroke-width="0.6"/><path d="M428,48.5 l14,14 M442,48.5 l-14,14" stroke="#b2b0a2" stroke-width="1.7"/><path d="M459.5,50 V58.6 L461.7,56.6 L463.6,60.6 L465.6,59.7 L463.8,56 H466.6 Z" fill="#fffff8" stroke="#9c8a4a" stroke-width="1" stroke-linejoin="round"/><rect x="48" y="71.2" width="6.5" height="3" fill="#d8c850" stroke="#8a7a30" stroke-width="0.7"/><path d="M51.2,74.5v2.5M47,77h8.5M47,77v1.5M51.2,77v1.5M55.5,77v1.5" stroke="#d03030" stroke-width="0.9" fill="none"/><rect x="45.8" y="78.3" width="2.8" height="2.5" fill="#333"/><rect x="50" y="78.3" width="2.8" height="2.5" fill="#333"/><rect x="54.2" y="78.3" width="2.8" height="2.5" fill="#333"/><rect x="115.5" y="70.6" width="11" height="10.4" fill="#fbfbf4" stroke="#c04848" stroke-width="1.1"/><path d="M117.5,72.5v6.8M120,72.5v6.8" stroke="#a4a030" stroke-width="1.4"/><path d="M121.5,73.5h1.8M121.5,76h1.5" stroke="#a4a030" stroke-width="1.1"/><path d="M125.2,75.5 q-2,0 -1.8,2.6 q0.3,1.2 1.8,1" fill="none" stroke="#a4a030" stroke-width="1.1"/><circle cx="124.8" cy="72.3" r="0.7" fill="#a4a030"/><rect x="188.2" y="70.6" width="10.4" height="9.8" fill="#fff" stroke="#1a1a1a" stroke-width="1.1"/><rect x="192.3" y="77.9" width="6.3" height="2.6" fill="#333"/><rect x="193.4" y="78.5" width="1.8" height="1.3" fill="#e8e070"/><rect x="196.3" y="78.5" width="1.6" height="1.3" fill="#f0ecb0"/><rect x="259.5" y="70.6" width="10.4" height="9.8" fill="#fafaf6" stroke="#1a1a1a" stroke-width="1.1"/><path d="M262.4,72.2h2.6q4,0 4,3.3q0,3.4 -4,3.4h-2.6z M260.8,73h1.6M260.8,75h1.6M260.8,77.4h1.6M269,75.5h0.9" fill="none" stroke="#c07838" stroke-width="1"/><path d="M339.2,71.5h11v6.5h-2v3h-7v-3h-2z" fill="#c9b544" stroke="#1e1e1e" stroke-width="1.1"/><rect x="340.7" y="73" width="2.6" height="1.4" fill="#222"/><rect x="340.7" y="75.3" width="2.6" height="1.4" fill="#222"/><rect x="345.2" y="73" width="3" height="3.6" fill="#333"/><rect x="342.2" y="78.5" width="5" height="1.5" fill="#ece0a0"/><path d="M437.3,71.5h11v6.5h-2v3h-7v-3h-2z" fill="#c9b544" stroke="#1e1e1e" stroke-width="1.1"/><rect x="438.8" y="73" width="2.6" height="1.4" fill="#222"/><rect x="438.8" y="75.3" width="2.6" height="1.4" fill="#222"/><rect x="443.3" y="73" width="3" height="3.6" fill="#333"/><rect x="440.3" y="78.5" width="5" height="1.5" fill="#ece0a0"/><rect x="617.3" y="73" width="3.4" height="1.1" fill="#8a8a8a"/><rect x="617.3" y="74.6" width="3.4" height="1.2" fill="#5a5a5a"/><path d="M616.6,76 H621.4 L619,78.4 Z" fill="#111"/><path d="M626.3,73.2 L631.3,77.6 M631.3,73.2 L626.3,77.6" stroke="#111" stroke-width="1.5"/><path d="M6.9,81.3 L11.6,76.9 L17.9,83.3 L13.3,88.2 Z" fill="#bca83c" stroke="#8a7628" stroke-width="0.7"/><path d="M6.9,81.3 L11.6,76.9 L13.6,78.9 L8.9,83.3 Z" fill="#d6c45a"/><path d="M10,84.5 L14.6,80 L17.6,83.2 L13.2,87.8 Z" fill="#a89430"/><path d="M14.7,88.4 L19.6,92.8 M17.4,85.8 L21.8,90.8" stroke="#8e8e9e" stroke-width="1"/><circle cx="14.5" cy="105.3" r="4.6" fill="none" stroke="#c8b44a" stroke-width="3.4"/><circle cx="14.5" cy="105.3" r="6.4" fill="none" stroke="#a89430" stroke-width="0.6"/><path d="M10.5,131 l8,-4 l-7,-1.5" stroke="#6a6a7a" stroke-width="0.9" fill="none"/><path d="M14,125 l5,-5" stroke="#d2bc44" stroke-width="2.2" stroke-linecap="round"/><circle cx="10" cy="131.5" r="1.4" fill="#c8b040"/><circle cx="19" cy="127" r="1.4" fill="#c8b040"/><path d="M9,154 v-5 l3,-3 h4" stroke="#6a6a6a" stroke-width="2.2" fill="none"/><path d="M16,145 l5,-5" stroke="#d2bc44" stroke-width="2.2" stroke-linecap="round"/><circle cx="9" cy="154.5" r="1.3" fill="#c8b040"/><path d="M8.5,176 l5,-11 h1.5 l5,11" fill="none" stroke="#c4ac40" stroke-width="2.6" stroke-linejoin="round"/><path d="M11,172h6" stroke="#c4ac40" stroke-width="1.6"/><path d="M7.5,176h4M16.5,176h4.5" stroke="#a89030" stroke-width="1"/><path d="M8.3,190.2h14v8.2h-2.5v4h-8.5v-4h-3z" fill="#faf9f2" stroke="#8e8a68" stroke-width="1.2"/><path d="M11.2,193.8 L16,188.4" stroke="#d8c048" stroke-width="2.4"/><path d="M11.2,193.8 l-1.2,1.2" stroke="#333" stroke-width="1.4"/><path d="M12,208.8h9.3v14.4h-13.3v-9.5h4z" fill="#fbfaf4" stroke="#4e4c3e" stroke-width="1.2" stroke-dasharray="1.2,1.2"/><path d="M11.8,221.2 L18,215" stroke="#d8c048" stroke-width="2.4"/><path d="M11.8,221.2 l-1.2,1.2" stroke="#333" stroke-width="1.4"/><path d="M11.8,230.6h8.8v12h-12.6v-8h3.8z" fill="#b0b0b4" stroke="#6a6850" stroke-width="1.2"/><path d="M11.8,241.2 L18,236" stroke="#d8c048" stroke-width="2.4"/><path d="M11.8,241.2 l-1.2,1.2" stroke="#333" stroke-width="1.4"/><path d="M12.8,252h8v13h-12.4v-8.2h4.4z" fill="none" stroke="#6a6a62" stroke-width="1.5"/><path d="M11.2,262.5 L17.5,257" stroke="#d8c048" stroke-width="2.4"/><path d="M11.2,262.5 l-1.2,1.2" stroke="#333" stroke-width="1.4"/><path d="M14.5,273.2h6.8v13.3h-12.5" fill="none" stroke="#6a6a62" stroke-width="1.5"/><path d="M10.8,284.4 L17.5,278.6" stroke="#d8c048" stroke-width="2.4"/><path d="M10.8,284.4 l-1.2,1.2" stroke="#333" stroke-width="1.4"/><rect x="8" y="298.5" width="14.5" height="9" rx="1" fill="none" stroke="#5e5e58" stroke-width="1.5"/><path d="M11,306 l7.5,-6" stroke="#d4bc40" stroke-width="2"/><circle cx="15" cy="322" r="5.6" fill="none" stroke="#5e5e58" stroke-width="1.5"/><path d="M11.8,325 l6.5,-6" stroke="#d4bc40" stroke-width="2"/><path d="M7.6,343.6H18.6V348.8H21.3 M11.6,340.4V346.5 M7.6,348.6H15.2V353.4H21.3 M11.6,348.6V353.4H7.6" stroke="#6e6e6e" stroke-width="1.5" fill="none"/><circle cx="7.6" cy="343.6" r="1.8" fill="#d4c040" stroke="#a89430" stroke-width="0.5"/><circle cx="7.6" cy="348.6" r="1.8" fill="#d4c040" stroke="#a89430" stroke-width="0.5"/><circle cx="7.6" cy="353.4" r="1.8" fill="#d4c040" stroke="#a89430" stroke-width="0.5"/><circle cx="21.3" cy="348.6" r="1.8" fill="#d4c040" stroke="#a89430" stroke-width="0.5"/><circle cx="21.3" cy="353.4" r="1.8" fill="#d4c040" stroke="#a89430" stroke-width="0.5"/><rect x="8" y="369.5" width="13.5" height="9.5" fill="#efe4a0" stroke="#b8a448" stroke-width="0.8"/><rect x="8.4" y="369.9" width="12.7" height="2" fill="#c8b450"/><path d="M9.5,373.5h2.5M10.7,373.5v4.5M13.5,373.5v4.5h2M17.5,373.5h2.8M18.9,373.5v4.5" stroke="#555" stroke-width="0.9"/><path d="M12.5,393 l2.5,2.8 l5,-6.5" stroke="#d0b030" stroke-width="2" fill="none"/><rect x="7.5" y="395" width="3.5" height="7.5" fill="#707068"/><rect x="19" y="395" width="3.5" height="7.5" fill="#707068"/><path d="M11,398.8h8" stroke="#c8b040" stroke-width="1.4"/><path d="M12,397v3.6M18,397v3.6" stroke="#c8b040" stroke-width="1"/><rect x="11" y="413.8" width="12" height="8" rx="3.5" fill="#a9a798"/><rect x="7" y="424.2" width="12" height="7" rx="3.2" fill="#a9a798"/><rect x="9.5" y="419.5" width="3" height="6" fill="#a9a798"/><rect x="11" y="433.3" width="12" height="8" rx="3.5" fill="#a9a798"/><rect x="7" y="443.7" width="12" height="7" rx="3.2" fill="#a9a798"/><rect x="9.5" y="439.0" width="3" height="6" fill="#a9a798"/></svg>
<svg class="a" style="left:0;top:0;font-family:'Liberation Sans',sans-serif;will-change:transform" width="638" height="491"><text x="18" y="16" textLength="290" lengthAdjust="spacingAndGlyphs" font-size="10.4" font-weight="normal" fill="#0a2a90" transform="translate(1,1)" opacity="0.5" stroke="#0a2a90" stroke-width="0.5">DesignSpark PCB powered by Allied - [PCB Design: tek_relay.pcb *]</text><text x="18" y="16" textLength="290" lengthAdjust="spacingAndGlyphs" font-size="10.4" font-weight="normal" fill="#ffffff" stroke="#ffffff" stroke-width="0.55">DesignSpark PCB powered by Allied - [PCB Design: tek_relay.pcb *]</text><text x="28.5" y="35.1" textLength="10.5" lengthAdjust="spacingAndGlyphs" font-size="9" font-weight="normal" fill="#000" stroke="#000" stroke-width="0.1">File</text><rect x="28.8" y="36.1" width="4" height="0.9" fill="#505050"/><text x="50" y="35.1" textLength="12.5" lengthAdjust="spacingAndGlyphs" font-size="9" font-weight="normal" fill="#000" stroke="#000" stroke-width="0.1">Edit</text><rect x="50.3" y="36.1" width="5" height="0.9" fill="#505050"/><text x="73" y="35.1" textLength="15.4" lengthAdjust="spacingAndGlyphs" font-size="9" font-weight="normal" fill="#000" stroke="#000" stroke-width="0.1">View</text><rect x="73.3" y="36.1" width="6" height="0.9" fill="#505050"/><text x="99.2" y="35.1" textLength="12.7" lengthAdjust="spacingAndGlyphs" font-size="9" font-weight="normal" fill="#000" stroke="#000" stroke-width="0.1">Add</text><rect x="99.5" y="36.1" width="6" height="0.9" fill="#505050"/><text x="122.5" y="35.1" textLength="27.7" lengthAdjust="spacingAndGlyphs" font-size="9" font-weight="normal" fill="#000" stroke="#000" stroke-width="0.1">Settings</text><rect x="122.8" y="36.1" width="5" height="0.9" fill="#505050"/><text x="160.8" y="35.1" textLength="23.5" lengthAdjust="spacingAndGlyphs" font-size="9" font-weight="normal" fill="#000" stroke="#000" stroke-width="0.1">Output</text><rect x="161.10000000000002" y="36.1" width="6" height="0.9" fill="#505050"/><text x="195" y="35.1" textLength="17.3" lengthAdjust="spacingAndGlyphs" font-size="9" font-weight="normal" fill="#000" stroke="#000" stroke-width="0.1">Tools</text><rect x="195.3" y="36.1" width="5" height="0.9" fill="#505050"/><text x="222.9" y="35.1" textLength="26.7" lengthAdjust="spacingAndGlyphs" font-size="9" font-weight="normal" fill="#000" stroke="#000" stroke-width="0.1">Window</text><rect x="223.20000000000002" y="36.1" width="8" height="0.9" fill="#505050"/><text x="260.2" y="35.1" textLength="14.7" lengthAdjust="spacingAndGlyphs" font-size="9" font-weight="normal" fill="#000" stroke="#000" stroke-width="0.1">Help</text><rect x="260.5" y="36.1" width="6" height="0.9" fill="#505050"/><text x="60.3" y="78.8" textLength="44" lengthAdjust="spacingAndGlyphs" font-size="8.8" font-weight="normal" fill="#000" stroke="#000" stroke-width="0.1">tek_relay.prj</text><text x="130.5" y="78.8" textLength="45.3" lengthAdjust="spacingAndGlyphs" font-size="8.8" font-weight="normal" fill="#000" stroke="#000" stroke-width="0.1">tek_relay.sch</text><text x="202.7" y="78.8" textLength="44.4" lengthAdjust="spacingAndGlyphs" font-size="8.8" font-weight="normal" fill="#000" stroke="#000" stroke-width="0.1">schematic.stf</text><text x="273.5" y="78.8" textLength="54.5" lengthAdjust="spacingAndGlyphs" font-size="8.8" font-weight="normal" fill="#000" stroke="#000" stroke-width="0.1">11x17-DEFAULT</text><text x="355.8" y="78.8" textLength="69.5" lengthAdjust="spacingAndGlyphs" font-size="8.8" font-weight="normal" fill="#000" stroke="#000" stroke-width="0.1">Analogue Circuit.pcb</text><text x="450" y="78.9" textLength="54.3" lengthAdjust="spacingAndGlyphs" font-size="9.2" font-weight="bold" fill="#000" >tek_relay.pcb</text><text x="516.6" y="486" textLength="11.7" lengthAdjust="spacingAndGlyphs" font-size="9" font-weight="normal" fill="#000" >Abs</text><text x="532.7" y="486" textLength="32.7" lengthAdjust="spacingAndGlyphs" font-size="9" font-weight="normal" fill="#000" >251.6861</text><text x="569.6" y="486" textLength="32.2" lengthAdjust="spacingAndGlyphs" font-size="9" font-weight="normal" fill="#000" >240.4095</text><text x="605.8" y="486" textLength="11.6" lengthAdjust="spacingAndGlyphs" font-size="9" font-weight="normal" fill="#000" >mm</text><text x="522.2" y="31.3" textLength="56.4" lengthAdjust="spacingAndGlyphs" font-size="7.6" font-weight="bold" fill="#dcdcdc" >DESIGN<tspan font-weight="normal" fill="#c8c8c8">SPARK</tspan></text><text x="541.4" y="39.9" textLength="15.8" lengthAdjust="spacingAndGlyphs" font-size="8" font-weight="bold" fill="#dcdcdc" >PCB</text></svg>
</body></html>
